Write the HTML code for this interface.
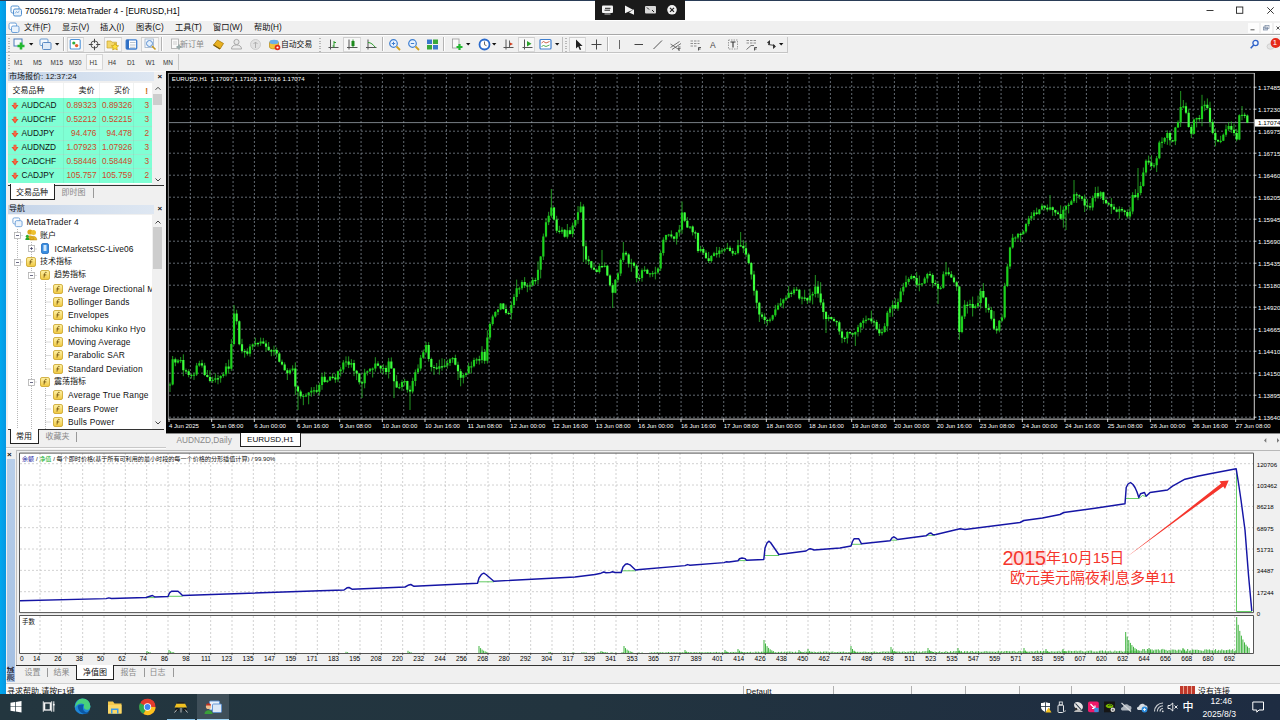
<!DOCTYPE html><html><head><meta charset="utf-8"><title>MT4</title><style>
html,body{margin:0;padding:0}
body{width:1280px;height:720px;overflow:hidden;position:relative;background:#f0f0f0;font-family:"Liberation Sans","Noto Sans CJK SC",sans-serif;font-size:8px}
.a{position:absolute;box-sizing:border-box}
.t{white-space:nowrap}
svg{overflow:visible}
</style></head><body><svg class="a" style="left:0;top:0" width="0" height="0"><defs><linearGradient id="fg" x1="0" y1="0" x2="0" y2="1"><stop offset="0" stop-color="#fff3a8"/><stop offset="1" stop-color="#f0c840"/></linearGradient></defs></svg><div class="a" style="left:0px;top:0px;width:1280px;height:1px;background:#2a3d57;"></div><div class="a" style="left:0px;top:1px;width:5.6px;height:693px;background:linear-gradient(90deg,#00a8ef,#0697e2);"></div><div class="a" style="left:6px;top:1px;width:1274px;height:20px;background:#ffffff;"></div><div class="a t " style="left:25px;top:6px;font-size:8.5px;line-height:10.5px;color:#000;">70056179: MetaTrader 4 - [EURUSD,H1]</div><svg class="a" style="left:10px;top:5px" width="12" height="12" viewBox="0 0 12 12"><rect x="1" y="1" width="8" height="7" rx="1.5" fill="#fff" stroke="#4f8fd0" stroke-width="1"/><rect x="3.5" y="4" width="8" height="7" rx="1.5" fill="#eaf3fc" stroke="#4f8fd0" stroke-width="1"/><path d="M5 8.5l1.5-2 1.3 1.5 1.5-2.3" stroke="#6a9bd0" stroke-width=".7" fill="none"/></svg><svg class="a" style="left:1200px;top:1px" width="80" height="20" viewBox="0 0 80 20"><path d="M6.5 9.5h7" stroke="#222" stroke-width="0.9"/><rect x="36.5" y="6" width="6.3" height="6.3" fill="none" stroke="#222" stroke-width="0.9"/><path d="M67.3 6.3l6.4 6.4M73.7 6.3l-6.4 6.4" stroke="#222" stroke-width="0.9"/></svg><div class="a" style="left:595px;top:0px;width:90px;height:20px;background:#1a1a1a;"></div><svg class="a" style="left:595px;top:0" width="90" height="20" viewBox="0 0 90 20"><rect x="7" y="5.5" width="11" height="7.5" rx="1" fill="#f2f2f2"/><rect x="9.5" y="13.5" width="6" height="1" fill="#ccc"/><path d="M9.5 10.2h5.5M10 8.3h5.5" stroke="#222" stroke-width="1"/><path d="M30 5.5l8 4.2-8 3.6zM39 9.2l-5 3.3 5 2.3z" fill="#f2f2f2"/><rect x="50" y="6" width="11" height="7.5" rx="1" fill="#d8d8d8"/><path d="M52 7.5l2 2M57 10l2 2" stroke="#222" stroke-width="1"/><circle cx="77" cy="9.8" r="4.8" fill="#f2f2f2"/><path d="M75 7.8l4 4M79 7.8l-4 4" stroke="#222" stroke-width="1.2"/></svg><div class="a" style="left:6px;top:21px;width:1274px;height:13.5px;background:#f0f0f0;"></div><svg class="a" style="left:8px;top:22px" width="12" height="12" viewBox="0 0 12 12"><rect x="1" y="1" width="7.5" height="6.5" rx="1.5" fill="#fff" stroke="#6ca0d8" stroke-width="1"/><rect x="3.5" y="4" width="7.5" height="6.5" rx="1.5" fill="#eaf3fc" stroke="#6ca0d8" stroke-width="1"/></svg><div class="a t " style="left:24px;top:23px;font-size:8.2px;line-height:10.2px;color:#111;">文件(F)</div><div class="a t " style="left:62px;top:23px;font-size:8.2px;line-height:10.2px;color:#111;">显示(V)</div><div class="a t " style="left:100px;top:23px;font-size:8.2px;line-height:10.2px;color:#111;">插入(I)</div><div class="a t " style="left:136px;top:23px;font-size:8.2px;line-height:10.2px;color:#111;">图表(C)</div><div class="a t " style="left:175px;top:23px;font-size:8.2px;line-height:10.2px;color:#111;">工具(T)</div><div class="a t " style="left:213px;top:23px;font-size:8.2px;line-height:10.2px;color:#111;">窗口(W)</div><div class="a t " style="left:254px;top:23px;font-size:8.2px;line-height:10.2px;color:#111;">帮助(H)</div><div class="a" style="left:1248px;top:23px;width:11px;height:10px;background:#fdfdfd;"></div><div class="a" style="left:1261px;top:23px;width:11px;height:10px;background:#fdfdfd;"></div><div class="a" style="left:1274px;top:23px;width:6px;height:10px;background:#fdfdfd;"></div><svg class="a" style="left:1248px;top:23px" width="32" height="10" viewBox="0 0 32 10"><path d="M2.5 6.8h4" stroke="#555" stroke-width="1"/><rect x="15.5" y="4" width="4" height="3" fill="#cfd8e4" stroke="#7788a0" stroke-width=".7"/><rect x="17" y="2.5" width="4" height="3" fill="none" stroke="#7788a0" stroke-width=".7"/><path d="M28.5 3.5l3 3M31.5 3.5l-3 3" stroke="#555" stroke-width="1"/></svg><div class="a" style="left:6px;top:34px;width:1274px;height:1px;background:#a8a8a8;"></div><div class="a" style="left:6px;top:35px;width:1274px;height:1px;background:#ffffff;"></div><div class="a" style="left:8px;top:38px;width:2px;height:14px;background:repeating-linear-gradient(#b8b8b8 0 1px,transparent 1px 2.6px)"></div><div class="a" style="left:63px;top:37px;width:1px;height:14px;background:#b4b4b4;"></div><div class="a" style="left:64px;top:37px;width:1px;height:14px;background:#fff;"></div><div class="a" style="left:161px;top:37px;width:1px;height:14px;background:#b4b4b4;"></div><div class="a" style="left:162px;top:37px;width:1px;height:14px;background:#fff;"></div><div class="a" style="left:67px;top:37px;width:17px;height:15px;background:#f7f7f7;border:1px solid #dadada;border-top-color:#cfcfcf;border-left-color:#d2d2d2;"></div><div class="a" style="left:104px;top:37px;width:18px;height:15px;background:#f7f7f7;border:1px solid #dadada;border-top-color:#cfcfcf;border-left-color:#d2d2d2;"></div><div class="a" style="left:141px;top:37px;width:18px;height:15px;background:#f7f7f7;border:1px solid #dadada;border-top-color:#cfcfcf;border-left-color:#d2d2d2;"></div><svg class="a" style="left:28.5px;top:43px" width="5" height="3" viewBox="0 0 5 3"><path d="M0 0h4.4L2.2 2.6z" fill="#111"/></svg><svg class="a" style="left:54.5px;top:43px" width="5" height="3" viewBox="0 0 5 3"><path d="M0 0h4.4L2.2 2.6z" fill="#111"/></svg><svg class="a" style="left:12.5px;top:38px" width="13" height="13" viewBox="0 0 13 13"><rect x="1" y="1" width="8" height="7" fill="#f4f8fc" stroke="#4a7ab8" stroke-width="1"/><path d="M8 4.5v7M4.5 8h7" stroke="#22b830" stroke-width="2.6"/></svg><svg class="a" style="left:38.5px;top:38px" width="13" height="13" viewBox="0 0 13 13"><rect x="1" y="1" width="8" height="6.5" rx="1" fill="#f4f8fc" stroke="#6a9ad0" stroke-width="1"/><rect x="3.5" y="4.5" width="8.5" height="7" rx="1" fill="#dfeaf7" stroke="#5a8ac4" stroke-width="1"/></svg><svg class="a" style="left:69px;top:38px" width="13" height="13" viewBox="0 0 13 13"><rect x="1.2" y="1.5" width="10" height="9.5" rx="1" fill="#fff" stroke="#4f93d8" stroke-width="1.1"/><circle cx="4.8" cy="5" r="1.6" fill="#2fae3a"/><circle cx="7.6" cy="7.6" r="1.7" fill="#e8602a"/></svg><svg class="a" style="left:88px;top:38px" width="13" height="13" viewBox="0 0 13 13"><circle cx="6.5" cy="6.5" r="3.6" fill="none" stroke="#555" stroke-width="1"/><path d="M6.5 .8v4M6.5 8.2v4M.8 6.5h4M8.2 6.5h4" stroke="#444" stroke-width="1"/></svg><svg class="a" style="left:105.5px;top:38px" width="13" height="13" viewBox="0 0 13 13"><path d="M1 3h4l1 1.2h4.5v5.8H1z" fill="#f3d76a" stroke="#c9a227" stroke-width=".7"/><path d="M9 5.2l1.2 2.3 2.4.3-1.8 1.7.5 2.5L9 10.8 6.700 12l.5-2.500-1.800-1.700 2.400-.3z" fill="#ffe13a" stroke="#c49a10" stroke-width=".7"/></svg><svg class="a" style="left:124.5px;top:38px" width="13" height="13" viewBox="0 0 13 13"><rect x="1.2" y="1.8" width="10.5" height="9.200" rx="1" fill="#fff" stroke="#3f7fd0" stroke-width="1.3"/><rect x="1.200" y="1.8" width="2.8" height="9.2" fill="#2f6fc4"/><path d="M5 4.5h5.500M5 7h5.500M5 9.300h5.500" stroke="#9ab" stroke-width=".7"/></svg><svg class="a" style="left:144px;top:38px" width="13" height="13" viewBox="0 0 13 13"><rect x="1" y="1" width="8.500" height="8.500" fill="#f8fbff" stroke="#9ab0c8" stroke-width=".8"/><circle cx="5.500" cy="5.500" r="3" fill="#e4f0fc" stroke="#5a8fd0" stroke-width="1"/><path d="M8 8l3.500 3.500" stroke="#c89a20" stroke-width="1.600"/></svg><svg class="a" style="left:169.5px;top:38px" width="13" height="13" viewBox="0 0 13 13"><rect x="1.500" y="1" width="7" height="9.500" fill="#fafafa" stroke="#aaa" stroke-width=".8"/><path d="M3 4h4M3 6h4" stroke="#bbb" stroke-width=".7"/><path d="M9 6.500v5M6.500 9h5" stroke="#9aa" stroke-width="1.800"/></svg><div class="a t " style="left:180px;top:39.5px;font-size:8px;line-height:10px;color:#8c8c8c;">新订单</div><svg class="a" style="left:212px;top:38px" width="13" height="13" viewBox="0 0 13 13"><path d="M1.500 7l4-5 6 3.500-3.500 5.500z" fill="#e8b020" stroke="#a87808" stroke-width=".8"/><path d="M1.500 7l6.500 4" stroke="#7a5a08" stroke-width="1.200"/></svg><svg class="a" style="left:230px;top:38px" width="13" height="13" viewBox="0 0 13 13"><circle cx="6.500" cy="4" r="2.600" fill="#e8e8e8" stroke="#999" stroke-width=".8"/><path d="M1.500 11c0-3 2.200-4 5-4s5 1 5 4z" fill="#ececec" stroke="#999" stroke-width=".8"/></svg><svg class="a" style="left:248.5px;top:38px" width="13" height="13" viewBox="0 0 13 13"><circle cx="6.500" cy="6.500" r="5" fill="#e2e2e2" stroke="#c4c4c4" stroke-width=".8"/><path d="M6.500 4v6M4.500 5.500a3 3 0 0 1 4 0" stroke="#aaa" stroke-width=".9" fill="none"/></svg><svg class="a" style="left:267.5px;top:38px" width="13" height="13" viewBox="0 0 13 13"><path d="M1.500 4.500c0-2.500 9-2.500 9 0v4.500c0 2.500-9 2.500-9 0z" fill="#f2c23a" stroke="#b88a10" stroke-width=".7"/><ellipse cx="6" cy="4" rx="4.500" ry="2.200" fill="#6cb0e8"/><circle cx="9.500" cy="9.500" r="2.800" fill="#e02818"/><circle cx="9.500" cy="9.500" r="1.100" fill="#fff"/></svg><div class="a t " style="left:281px;top:39.8px;font-size:7.8px;line-height:9.8px;color:#111;">自动交易</div><div class="a" style="left:319px;top:38px;width:2px;height:14px;background:repeating-linear-gradient(#b8b8b8 0 1px,transparent 1px 2.6px)"></div><div class="a" style="left:343px;top:37px;width:18px;height:15px;background:#f7f7f7;border:1px solid #dadada;border-top-color:#cfcfcf;border-left-color:#d2d2d2;"></div><svg class="a" style="left:326.5px;top:38px" width="13" height="13" viewBox="0 0 13 13"><path d="M3.500 1.500v10M1.500 9.500h10" stroke="#555" stroke-width="1"/><path d="M7 3v6.500M7 4.500h2M5.500 8h1.500" stroke="#2a9a2a" stroke-width="1"/></svg><svg class="a" style="left:345.5px;top:38px" width="13" height="13" viewBox="0 0 13 13"><path d="M3 1.500v10M1 9.500h10.500" stroke="#555" stroke-width="1"/><rect x="5.500" y="3" width="3" height="5" fill="#1e8a1e"/><path d="M7 1.500v8" stroke="#1e8a1e" stroke-width=".9"/></svg><svg class="a" style="left:364.5px;top:38px" width="13" height="13" viewBox="0 0 13 13"><path d="M3 1.500v10M1 9.500h10.500" stroke="#555" stroke-width="1"/><path d="M3 4.500c3 0 5 2 7.500 5" stroke="#2a9a2a" stroke-width="1" fill="none"/></svg><div class="a" style="left:382px;top:37px;width:1px;height:14px;background:#b4b4b4;"></div><div class="a" style="left:383px;top:37px;width:1px;height:14px;background:#fff;"></div><svg class="a" style="left:387.5px;top:38px" width="13" height="13" viewBox="0 0 13 13"><circle cx="5.500" cy="5.500" r="3.800" fill="#eaf3fd" stroke="#3f7fd0" stroke-width="1.200"/><path d="M3.800 5.500h3.400M5.500 3.800v3.400" stroke="#3f7fd0" stroke-width="1"/><path d="M8.500 8.500l3.500 3.500" stroke="#d0a020" stroke-width="1.800"/></svg><svg class="a" style="left:406.5px;top:38px" width="13" height="13" viewBox="0 0 13 13"><circle cx="5.500" cy="5.500" r="3.800" fill="#eaf3fd" stroke="#3f7fd0" stroke-width="1.200"/><path d="M3.800 5.500h3.400" stroke="#3f7fd0" stroke-width="1"/><path d="M8.500 8.500l3.500 3.500" stroke="#d0a020" stroke-width="1.800"/></svg><svg class="a" style="left:425.5px;top:38px" width="13" height="13" viewBox="0 0 13 13"><rect x="1" y="1.500" width="5" height="4.500" fill="#3a78cc"/><rect x="7" y="1.500" width="5" height="4.500" fill="#38a838"/><rect x="1" y="7" width="5" height="4.500" fill="#38a838"/><rect x="7" y="7" width="5" height="4.500" fill="#3a78cc"/></svg><div class="a" style="left:443px;top:37px;width:1px;height:14px;background:#b4b4b4;"></div><div class="a" style="left:444px;top:37px;width:1px;height:14px;background:#fff;"></div><svg class="a" style="left:451px;top:38px" width="13" height="13" viewBox="0 0 13 13"><rect x="1.500" y="1" width="6.500" height="9" fill="#fafafa" stroke="#999" stroke-width=".8"/><path d="M8.500 6v6M5.500 9h6" stroke="#22b830" stroke-width="2.200"/></svg><svg class="a" style="left:465.5px;top:43px" width="5" height="3" viewBox="0 0 5 3"><path d="M0 0h4.4L2.2 2.6z" fill="#111"/></svg><svg class="a" style="left:477.5px;top:38px" width="13" height="13" viewBox="0 0 13 13"><circle cx="6.500" cy="6.500" r="5" fill="#fff" stroke="#2a6acc" stroke-width="1.800"/><path d="M6.500 3.500v3.200l2 1" stroke="#555" stroke-width=".9" fill="none"/></svg><svg class="a" style="left:491.5px;top:43px" width="5" height="3" viewBox="0 0 5 3"><path d="M0 0h4.4L2.2 2.6z" fill="#111"/></svg><svg class="a" style="left:501.5px;top:38px" width="13" height="13" viewBox="0 0 13 13"><path d="M4 1.500v10M1.500 9.500h10" stroke="#555" stroke-width="1"/><path d="M7.500 2.500v7" stroke="#555" stroke-width=".9"/><path d="M8 4.500l3 1.500-3 1.500z" fill="#d04020"/></svg><div class="a" style="left:518px;top:37px;width:17px;height:15px;background:#f7f7f7;border:1px solid #dadada;border-top-color:#cfcfcf;border-left-color:#d2d2d2;"></div><svg class="a" style="left:520.5px;top:38px" width="13" height="13" viewBox="0 0 13 13"><path d="M3.500 1.500v10M1.500 9.500h10" stroke="#555" stroke-width="1"/><path d="M6 3l4.500 2.700L6 8.400z" fill="#2aa02a"/></svg><svg class="a" style="left:538.5px;top:38px" width="13" height="13" viewBox="0 0 13 13"><rect x="1" y="1.500" width="11" height="9.500" rx="1" fill="#fff" stroke="#3f7fd0" stroke-width="1.200"/><path d="M2.500 5l2-1.500 2.500 1.500 3.500-1.500" stroke="#c04020" stroke-width=".8" fill="none"/><path d="M2.500 8.500l2-1 2.500 1 3.500-1.500" stroke="#2a9a2a" stroke-width=".8" fill="none"/></svg><svg class="a" style="left:555px;top:43px" width="5" height="3" viewBox="0 0 5 3"><path d="M0 0h4.4L2.2 2.6z" fill="#111"/></svg><div class="a" style="left:562px;top:36.5px;width:1px;height:16px;background:#c0c0c0;"></div><div class="a" style="left:564.5px;top:38px;width:2px;height:14px;background:repeating-linear-gradient(#b8b8b8 0 1px,transparent 1px 2.6px)"></div><div class="a" style="left:569px;top:37px;width:17px;height:15px;background:#f7f7f7;border:1px solid #dadada;border-top-color:#cfcfcf;border-left-color:#d2d2d2;"></div><svg class="a" style="left:571.5px;top:38px" width="13" height="13" viewBox="0 0 13 13"><path d="M4 1.500v9l2.200-2 1.600 3.500 1.400-.6-1.600-3.400h3z" fill="#222"/></svg><svg class="a" style="left:590px;top:38px" width="13" height="13" viewBox="0 0 13 13"><path d="M6.500 1.500v10M1.500 6.500h10" stroke="#444" stroke-width="1"/></svg><div class="a" style="left:607px;top:37px;width:1px;height:14px;background:#b4b4b4;"></div><div class="a" style="left:608px;top:37px;width:1px;height:14px;background:#fff;"></div><svg class="a" style="left:613px;top:38px" width="13" height="13" viewBox="0 0 13 13"><path d="M6.500 2v9" stroke="#666" stroke-width="1"/></svg><svg class="a" style="left:632px;top:38px" width="13" height="13" viewBox="0 0 13 13"><path d="M2.500 6.500h8.500" stroke="#444" stroke-width="1"/></svg><svg class="a" style="left:650.5px;top:38px" width="13" height="13" viewBox="0 0 13 13"><path d="M2.500 11l8.500-8.500" stroke="#555" stroke-width="1"/></svg><svg class="a" style="left:669px;top:38px" width="13" height="13" viewBox="0 0 13 13"><path d="M1.500 9.500l9-6M3 11.500l9-6M1.500 6l9 6" stroke="#555" stroke-width=".8"/><path d="M9 10.500h2.500M9 12h2M9 9h2.500" stroke="#333" stroke-width=".7"/></svg><svg class="a" style="left:688.5px;top:38px" width="13" height="13" viewBox="0 0 13 13"><path d="M1.500 3h9M1.500 5.500h9M1.500 8h6" stroke="#777" stroke-width=".8" stroke-dasharray="2.500 1"/><path d="M9.500 9.500h2.500M9.500 9.500v3M9.500 11h2" stroke="#333" stroke-width=".8"/></svg><div class="a t " style="left:710px;top:39.5px;font-size:8.5px;line-height:10.5px;color:#444;">A</div><svg class="a" style="left:726.5px;top:38px" width="13" height="13" viewBox="0 0 13 13"><rect x="1.500" y="2" width="9" height="9" fill="none" stroke="#888" stroke-width=".8" stroke-dasharray="1.500 1"/><path d="M3.500 4h5M6 4v5.500" stroke="#333" stroke-width="1.100"/></svg><svg class="a" style="left:745px;top:38px" width="13" height="13" viewBox="0 0 13 13"><path d="M1.500 2.500h10M1.500 5h10" stroke="#777" stroke-width=".8" stroke-dasharray="2.500 1"/><path d="M1.500 11.500l4.500-4h3" stroke="#555" stroke-width=".8" fill="none"/><path d="M9.500 9.500h2.500M9.500 9.500v3M9.500 11h2" stroke="#333" stroke-width=".8"/></svg><svg class="a" style="left:764.5px;top:38px" width="13" height="13" viewBox="0 0 13 13"><path d="M2 4.500l3-2.500v5zM11 8.500l-3 2.500v-5z" fill="#333"/><path d="M3 6.500l7 1" stroke="#333" stroke-width=".9"/></svg><svg class="a" style="left:778.5px;top:43px" width="5" height="3" viewBox="0 0 5 3"><path d="M0 0h4.4L2.2 2.6z" fill="#111"/></svg><div class="a" style="left:786.5px;top:36.5px;width:1px;height:16px;background:#c8c8c8;"></div><svg class="a" style="left:1249px;top:38px" width="31" height="14" viewBox="0 0 31 14"><circle cx="6.500" cy="5" r="2.600" fill="#eef5ff" stroke="#2f62c8" stroke-width="1.300"/><path d="M4.700 7l-3 3.300" stroke="#2f62c8" stroke-width="1.600"/><ellipse cx="21.500" cy="8.500" rx="3.500" ry="2.800" fill="#e4e4e4" stroke="#c0c0c0" stroke-width=".6"/><circle cx="26.600" cy="5" r="5" fill="#e52a1a"/></svg><div class="a t " style="left:1272.7px;top:37.5px;font-size:7.8px;line-height:9.8px;color:#fff;">1</div><div class="a" style="left:6px;top:52px;width:781px;height:1px;background:#c4c4c4;"></div><div class="a" style="left:6px;top:53px;width:781px;height:1px;background:#fbfbfb;"></div><div class="a" style="left:8px;top:55px;width:2px;height:14px;background:repeating-linear-gradient(#b8b8b8 0 1px,transparent 1px 2.6px)"></div><div class="a" style="left:86px;top:54px;width:17px;height:16px;background:#f8f8f8;border:1px solid #d6d6d6;border-bottom-color:#e4e4e4;"></div><div class="a t " style="left:14px;top:58.8px;font-size:6.4px;line-height:8.4px;color:#333;">M1</div><div class="a t " style="left:33px;top:58.8px;font-size:6.4px;line-height:8.4px;color:#333;">M5</div><div class="a t " style="left:50.5px;top:58.8px;font-size:6.4px;line-height:8.4px;color:#333;">M15</div><div class="a t " style="left:69px;top:58.8px;font-size:6.4px;line-height:8.4px;color:#333;">M30</div><div class="a t " style="left:89.5px;top:58.8px;font-size:6.4px;line-height:8.4px;color:#333;">H1</div><div class="a t " style="left:108px;top:58.8px;font-size:6.4px;line-height:8.4px;color:#333;">H4</div><div class="a t " style="left:127px;top:58.8px;font-size:6.4px;line-height:8.4px;color:#333;">D1</div><div class="a t " style="left:145.5px;top:58.8px;font-size:6.4px;line-height:8.4px;color:#333;">W1</div><div class="a t " style="left:163px;top:58.8px;font-size:6.4px;line-height:8.4px;color:#333;">MN</div><div class="a" style="left:178px;top:54px;width:1px;height:16px;background:#c8c8c8;"></div><div class="a" style="left:6px;top:71px;width:160px;height:1px;background:#fafafa;"></div><div class="a" style="left:8px;top:72px;width:146px;height:9.3px;background:linear-gradient(90deg,#c3d3e8,#d3dfee 50%,#dee7f2);"></div><div class="a t " style="left:9px;top:71.8px;font-size:8px;line-height:10px;color:#111;">市场报价: 12:37:24</div><div class="a t " style="left:157.5px;top:71.5px;font-size:8px;line-height:10px;color:#111;font-weight:bold">×</div><div class="a" style="left:8px;top:83px;width:144px;height:101px;background:#fff;"></div><div class="a" style="left:152px;top:83px;width:12px;height:101px;background:#f0f0f0;"></div><div class="a" style="left:152.5px;top:94px;width:9.5px;height:11px;background:#cdcdcd;"></div><svg class="a" style="left:153px;top:83px" width="10" height="101" viewBox="0 0 10 101"><path d="M2.500 6.800l2.500-2.500 2.500 2.500" stroke="#444" stroke-width="1" fill="none"/><path d="M2.500 95.500l2.500 2.500 2.500-2.500" stroke="#444" stroke-width="1" fill="none"/></svg><div class="a" style="left:8px;top:98.3px;width:144px;height:85.2px;background:#7fffd4;"></div><div class="a" style="left:8px;top:111.5px;width:144px;height:1px;background:#9be9cd;"></div><div class="a" style="left:8px;top:125.5px;width:144px;height:1px;background:#9be9cd;"></div><div class="a" style="left:8px;top:139.5px;width:144px;height:1px;background:#9be9cd;"></div><div class="a" style="left:8px;top:153.5px;width:144px;height:1px;background:#9be9cd;"></div><div class="a" style="left:8px;top:167.5px;width:144px;height:1px;background:#9be9cd;"></div><div class="a" style="left:63px;top:83px;width:1px;height:100px;background:rgba(60,90,80,.08);"></div><div class="a" style="left:98.5px;top:83px;width:1px;height:100px;background:rgba(60,90,80,.08);"></div><div class="a" style="left:133.3px;top:83px;width:1px;height:100px;background:rgba(60,90,80,.08);"></div><div class="a t " style="left:12.5px;top:85.9px;font-size:8px;line-height:10px;color:#111;">交易品种</div><div class="a t " style="left:78.5px;top:85.9px;font-size:8px;line-height:10px;color:#111;">卖价</div><div class="a t " style="left:114px;top:85.9px;font-size:8px;line-height:10px;color:#111;">买价</div><div class="a t " style="left:145.3px;top:85.7px;font-size:8.5px;line-height:10.5px;color:#c8680f;font-weight:bold;">!</div><svg class="a" style="left:11px;top:101.5px" width="8" height="8" viewBox="0 0 8 8"><path d="M2.600 .700h2.800v2.300h2.100L4 7.400.500 3h2.100z" fill="#e8482a"/><path d="M3.200 1.300h1.600v2.300h1.200L4 6 2 3.600h1.200z" fill="#ff8a60" opacity=".6"/></svg><div class="a t " style="left:21.5px;top:100.2px;font-size:8.3px;line-height:10.3px;color:#111;">AUDCAD</div><div class="a t" style="right:1183.5px;top:100.2px;font-size:8.300px;line-height:10px;color:#d04828">0.89323</div><div class="a t" style="right:1148px;top:100.2px;font-size:8.300px;line-height:10px;color:#d04828">0.89326</div><div class="a t" style="right:1131px;top:100.2px;font-size:8.300px;line-height:10px;color:#d04828">3</div><svg class="a" style="left:11px;top:115.5px" width="8" height="8" viewBox="0 0 8 8"><path d="M2.600 .700h2.800v2.300h2.100L4 7.400.500 3h2.100z" fill="#e8482a"/><path d="M3.200 1.300h1.600v2.300h1.200L4 6 2 3.600h1.200z" fill="#ff8a60" opacity=".6"/></svg><div class="a t " style="left:21.5px;top:114.2px;font-size:8.3px;line-height:10.3px;color:#111;">AUDCHF</div><div class="a t" style="right:1183.5px;top:114.2px;font-size:8.300px;line-height:10px;color:#d04828">0.52212</div><div class="a t" style="right:1148px;top:114.2px;font-size:8.300px;line-height:10px;color:#d04828">0.52215</div><div class="a t" style="right:1131px;top:114.2px;font-size:8.300px;line-height:10px;color:#d04828">3</div><svg class="a" style="left:11px;top:129.5px" width="8" height="8" viewBox="0 0 8 8"><path d="M2.600 .700h2.800v2.300h2.100L4 7.400.500 3h2.100z" fill="#e8482a"/><path d="M3.200 1.300h1.600v2.300h1.200L4 6 2 3.600h1.200z" fill="#ff8a60" opacity=".6"/></svg><div class="a t " style="left:21.5px;top:128.2px;font-size:8.3px;line-height:10.3px;color:#111;">AUDJPY</div><div class="a t" style="right:1183.5px;top:128.2px;font-size:8.300px;line-height:10px;color:#d04828">94.476</div><div class="a t" style="right:1148px;top:128.2px;font-size:8.300px;line-height:10px;color:#d04828">94.478</div><div class="a t" style="right:1131px;top:128.2px;font-size:8.300px;line-height:10px;color:#d04828">2</div><svg class="a" style="left:11px;top:143.5px" width="8" height="8" viewBox="0 0 8 8"><path d="M2.600 .700h2.800v2.300h2.100L4 7.400.500 3h2.100z" fill="#e8482a"/><path d="M3.200 1.300h1.600v2.300h1.200L4 6 2 3.600h1.200z" fill="#ff8a60" opacity=".6"/></svg><div class="a t " style="left:21.5px;top:142.2px;font-size:8.3px;line-height:10.3px;color:#111;">AUDNZD</div><div class="a t" style="right:1183.5px;top:142.2px;font-size:8.300px;line-height:10px;color:#d04828">1.07923</div><div class="a t" style="right:1148px;top:142.2px;font-size:8.300px;line-height:10px;color:#d04828">1.07926</div><div class="a t" style="right:1131px;top:142.2px;font-size:8.300px;line-height:10px;color:#d04828">3</div><svg class="a" style="left:11px;top:157.5px" width="8" height="8" viewBox="0 0 8 8"><path d="M2.600 .700h2.800v2.300h2.100L4 7.400.500 3h2.100z" fill="#e8482a"/><path d="M3.200 1.300h1.600v2.300h1.200L4 6 2 3.600h1.200z" fill="#ff8a60" opacity=".6"/></svg><div class="a t " style="left:21.5px;top:156.2px;font-size:8.3px;line-height:10.3px;color:#111;">CADCHF</div><div class="a t" style="right:1183.5px;top:156.2px;font-size:8.300px;line-height:10px;color:#d04828">0.58446</div><div class="a t" style="right:1148px;top:156.2px;font-size:8.300px;line-height:10px;color:#d04828">0.58449</div><div class="a t" style="right:1131px;top:156.2px;font-size:8.300px;line-height:10px;color:#d04828">3</div><svg class="a" style="left:11px;top:171.5px" width="8" height="8" viewBox="0 0 8 8"><path d="M2.600 .700h2.800v2.300h2.100L4 7.400.500 3h2.100z" fill="#e8482a"/><path d="M3.200 1.300h1.600v2.300h1.200L4 6 2 3.600h1.200z" fill="#ff8a60" opacity=".6"/></svg><div class="a t " style="left:21.5px;top:170.2px;font-size:8.3px;line-height:10.3px;color:#111;">CADJPY</div><div class="a t" style="right:1183.5px;top:170.2px;font-size:8.300px;line-height:10px;color:#d04828">105.757</div><div class="a t" style="right:1148px;top:170.2px;font-size:8.300px;line-height:10px;color:#d04828">105.759</div><div class="a t" style="right:1131px;top:170.2px;font-size:8.300px;line-height:10px;color:#d04828">2</div><div class="a" style="left:8px;top:184.5px;width:156px;height:1px;background:#333;"></div><div class="a" style="left:9.5px;top:184px;width:45px;height:15.5px;background:#fff;border:1px solid #222;border-top:none;"></div><div class="a t " style="left:16px;top:187.8px;font-size:8px;line-height:10px;color:#111;">交易品种</div><div class="a t " style="left:61.5px;top:187.8px;font-size:8px;line-height:10px;color:#888;">即时图</div><div class="a" style="left:92.5px;top:188px;width:1px;height:10px;background:#999;"></div><div class="a" style="left:8px;top:204.7px;width:146px;height:9px;background:linear-gradient(90deg,#c3d3e8,#d3dfee 50%,#dee7f2);"></div><div class="a t " style="left:9px;top:204.3px;font-size:8px;line-height:10px;color:#111;">导航</div><div class="a t " style="left:157.5px;top:203.5px;font-size:8px;line-height:10px;color:#111;font-weight:bold">×</div><div class="a" style="left:8px;top:215px;width:144px;height:214px;background:#fff;"></div><div class="a" style="left:152px;top:215px;width:12px;height:214px;background:#f0f0f0;"></div><div class="a" style="left:152.5px;top:227px;width:9.5px;height:42px;background:#cdcdcd;"></div><svg class="a" style="left:153px;top:215px" width="10" height="214" viewBox="0 0 10 214"><path d="M2.500 8.500l2.500-2.500 2.500 2.500" stroke="#444" stroke-width="1" fill="none"/><path d="M2.500 206.500l2.500 2.500 2.500-2.500" stroke="#444" stroke-width="1" fill="none"/></svg><svg class="a" style="left:0;top:0" width="170" height="430" viewBox="0 0 170 430"><path d="M17.500 229V429M17.500 235.500h6M17.500 262h6M31.500 242V429M31.500 249h5M31.500 275.500h5M31.500 382h5M45.500 282V369M45.500 388V429M45.500 289h6M45.500 302h6M45.500 315.500h6M45.500 329h6M45.500 342h6M45.500 355.500h6M45.500 369h6M45.500 395.500h6M45.500 409h6M45.500 422h6" stroke="#9a9a9a" stroke-width=".7" stroke-dasharray="1 1" fill="none"/></svg><svg class="a" style="left:12px;top:216.500px" width="11" height="11" viewBox="0 0 12 12"><rect x="1" y="1" width="7.500" height="6.500" rx="1.500" fill="#fff" stroke="#6ca0d8" stroke-width="1"/><rect x="3.500" y="4" width="7.500" height="6.500" rx="1.500" fill="#eaf3fc" stroke="#6ca0d8" stroke-width="1"/></svg><div class="a t " style="left:26.5px;top:217.0px;font-size:8.4px;line-height:10.4px;color:#111;letter-spacing:.2px;">MetaTrader 4</div><svg class="a" style="left:14.0px;top:231.83333333333334px" width="7" height="7" viewBox="0 0 7 7"><rect x=".500" y=".500" width="6" height="6" fill="#fff" stroke="#b0b0b0" stroke-width=".8"/><path d="M2 3.500h3" stroke="#446" stroke-width=".8"/></svg><svg class="a" style="left:24.500px;top:229.33333333333334px" width="12" height="12" viewBox="0 0 12 12"><circle cx="5" cy="3" r="2.600" fill="#e0a818"/><circle cx="8.500" cy="3.600" r="2.500" fill="#edc030"/><path d="M1.500 10.500c0-5 7-5 7 0zM5 11c0-5 6.800-5 6.800 0z" fill="#e6b422" stroke="#b88a10" stroke-width=".5"/><circle cx="2.300" cy="7.300" r="1.500" fill="#30b030"/><path d="M.300 11c0-3.200 4.200-3.200 4.200 0z" fill="#28a428"/></svg><div class="a t " style="left:40px;top:231.03333333333333px;font-size:8px;line-height:10px;color:#111;">账户</div><svg class="a" style="left:28.0px;top:245.16666666666666px" width="7" height="7" viewBox="0 0 7 7"><rect x=".500" y=".500" width="6" height="6" fill="#fff" stroke="#b0b0b0" stroke-width=".8"/><path d="M2 3.500h3M3.500 2v3" stroke="#446" stroke-width=".8"/></svg><svg class="a" style="left:41px;top:243.16666666666666px" width="8" height="11" viewBox="0 0 8 11"><rect x=".500" y=".500" width="7" height="10" rx="1.500" fill="#3a8ee0" stroke="#1f6cc0" stroke-width=".8"/><rect x="2.500" y="2" width="3" height="6" fill="#cfe6fb"/></svg><div class="a t " style="left:54.5px;top:243.66666666666666px;font-size:8.4px;line-height:10.4px;color:#111;letter-spacing:.1px;">ICMarketsSC-Live06</div><svg class="a" style="left:14.0px;top:258.5px" width="7" height="7" viewBox="0 0 7 7"><rect x=".500" y=".500" width="6" height="6" fill="#fff" stroke="#b0b0b0" stroke-width=".8"/><path d="M2 3.500h3" stroke="#446" stroke-width=".8"/></svg><svg class="a" style="left:25.5px;top:257.0px" width="10" height="10" viewBox="0 0 10 10"><rect x=".500" y=".500" width="9" height="9" rx="1.500" fill="url(#fg)" stroke="#c9a227" stroke-width=".8"/><path d="M6.600 2.400c-1.500-.500-1.900.500-2.100 2l-.500 3.200M3.400 4.900h2.900" stroke="#6a4a08" stroke-width=".8" fill="none"/></svg><div class="a t " style="left:40px;top:257.4px;font-size:8px;line-height:10px;color:#111;">技术指标</div><svg class="a" style="left:28.0px;top:271.8333333333333px" width="7" height="7" viewBox="0 0 7 7"><rect x=".500" y=".500" width="6" height="6" fill="#fff" stroke="#b0b0b0" stroke-width=".8"/><path d="M2 3.500h3" stroke="#446" stroke-width=".8"/></svg><svg class="a" style="left:39.5px;top:270.3333333333333px" width="10" height="10" viewBox="0 0 10 10"><rect x=".500" y=".500" width="9" height="9" rx="1.500" fill="url(#fg)" stroke="#c9a227" stroke-width=".8"/><path d="M6.600 2.400c-1.500-.500-1.900.500-2.100 2l-.500 3.200M3.400 4.900h2.900" stroke="#6a4a08" stroke-width=".8" fill="none"/></svg><div class="a t " style="left:54px;top:270.3333333333333px;font-size:8px;line-height:10px;color:#111;">趋势指标</div><svg class="a" style="left:53px;top:283.6666666666667px" width="10" height="10" viewBox="0 0 10 10"><rect x=".500" y=".500" width="9" height="9" rx="1.500" fill="url(#fg)" stroke="#c9a227" stroke-width=".8"/><path d="M6.600 2.400c-1.500-.500-1.900.500-2.100 2l-.500 3.200M3.400 4.900h2.900" stroke="#6a4a08" stroke-width=".8" fill="none"/></svg><div class="a t" style="left:68px;top:283.6666666666667px;font-size:8.400px;letter-spacing:.2px;line-height:10px;color:#111;max-width:83.500px;overflow:hidden">Average Directional M</div><svg class="a" style="left:53px;top:297.0px" width="10" height="10" viewBox="0 0 10 10"><rect x=".500" y=".500" width="9" height="9" rx="1.500" fill="url(#fg)" stroke="#c9a227" stroke-width=".8"/><path d="M6.600 2.400c-1.500-.500-1.900.500-2.100 2l-.500 3.200M3.400 4.900h2.900" stroke="#6a4a08" stroke-width=".8" fill="none"/></svg><div class="a t" style="left:68px;top:297.0px;font-size:8.400px;letter-spacing:.2px;line-height:10px;color:#111;max-width:83.500px;overflow:hidden">Bollinger Bands</div><svg class="a" style="left:53px;top:310.33333333333337px" width="10" height="10" viewBox="0 0 10 10"><rect x=".500" y=".500" width="9" height="9" rx="1.500" fill="url(#fg)" stroke="#c9a227" stroke-width=".8"/><path d="M6.600 2.400c-1.500-.500-1.900.500-2.100 2l-.500 3.200M3.400 4.900h2.900" stroke="#6a4a08" stroke-width=".8" fill="none"/></svg><div class="a t" style="left:68px;top:310.33333333333337px;font-size:8.400px;letter-spacing:.2px;line-height:10px;color:#111;max-width:83.500px;overflow:hidden">Envelopes</div><svg class="a" style="left:53px;top:323.6666666666667px" width="10" height="10" viewBox="0 0 10 10"><rect x=".500" y=".500" width="9" height="9" rx="1.500" fill="url(#fg)" stroke="#c9a227" stroke-width=".8"/><path d="M6.600 2.400c-1.500-.500-1.900.500-2.100 2l-.500 3.200M3.400 4.900h2.900" stroke="#6a4a08" stroke-width=".8" fill="none"/></svg><div class="a t" style="left:68px;top:323.6666666666667px;font-size:8.400px;letter-spacing:.2px;line-height:10px;color:#111;max-width:83.500px;overflow:hidden">Ichimoku Kinko Hyo</div><svg class="a" style="left:53px;top:337.0px" width="10" height="10" viewBox="0 0 10 10"><rect x=".500" y=".500" width="9" height="9" rx="1.500" fill="url(#fg)" stroke="#c9a227" stroke-width=".8"/><path d="M6.600 2.400c-1.500-.500-1.900.500-2.100 2l-.500 3.200M3.400 4.900h2.900" stroke="#6a4a08" stroke-width=".8" fill="none"/></svg><div class="a t" style="left:68px;top:337.0px;font-size:8.400px;letter-spacing:.2px;line-height:10px;color:#111;max-width:83.500px;overflow:hidden">Moving Average</div><svg class="a" style="left:53px;top:350.33333333333337px" width="10" height="10" viewBox="0 0 10 10"><rect x=".500" y=".500" width="9" height="9" rx="1.500" fill="url(#fg)" stroke="#c9a227" stroke-width=".8"/><path d="M6.600 2.400c-1.500-.500-1.900.500-2.100 2l-.500 3.200M3.400 4.900h2.900" stroke="#6a4a08" stroke-width=".8" fill="none"/></svg><div class="a t" style="left:68px;top:350.33333333333337px;font-size:8.400px;letter-spacing:.2px;line-height:10px;color:#111;max-width:83.500px;overflow:hidden">Parabolic SAR</div><svg class="a" style="left:53px;top:363.6666666666667px" width="10" height="10" viewBox="0 0 10 10"><rect x=".500" y=".500" width="9" height="9" rx="1.500" fill="url(#fg)" stroke="#c9a227" stroke-width=".8"/><path d="M6.600 2.400c-1.500-.500-1.900.500-2.100 2l-.500 3.200M3.400 4.900h2.900" stroke="#6a4a08" stroke-width=".8" fill="none"/></svg><div class="a t" style="left:68px;top:363.6666666666667px;font-size:8.400px;letter-spacing:.2px;line-height:10px;color:#111;max-width:83.500px;overflow:hidden">Standard Deviation</div><svg class="a" style="left:28.0px;top:378.5px" width="7" height="7" viewBox="0 0 7 7"><rect x=".500" y=".500" width="6" height="6" fill="#fff" stroke="#b0b0b0" stroke-width=".8"/><path d="M2 3.500h3" stroke="#446" stroke-width=".8"/></svg><svg class="a" style="left:39.5px;top:377.0px" width="10" height="10" viewBox="0 0 10 10"><rect x=".500" y=".500" width="9" height="9" rx="1.500" fill="url(#fg)" stroke="#c9a227" stroke-width=".8"/><path d="M6.600 2.400c-1.500-.500-1.900.500-2.100 2l-.500 3.200M3.400 4.900h2.900" stroke="#6a4a08" stroke-width=".8" fill="none"/></svg><div class="a t " style="left:54px;top:377.0px;font-size:8px;line-height:10px;color:#111;">震荡指标</div><svg class="a" style="left:53px;top:390.33333333333337px" width="10" height="10" viewBox="0 0 10 10"><rect x=".500" y=".500" width="9" height="9" rx="1.500" fill="url(#fg)" stroke="#c9a227" stroke-width=".8"/><path d="M6.600 2.400c-1.500-.500-1.900.500-2.100 2l-.500 3.200M3.400 4.900h2.900" stroke="#6a4a08" stroke-width=".8" fill="none"/></svg><div class="a t " style="left:68px;top:390.33333333333337px;font-size:8.4px;line-height:10.4px;color:#111;letter-spacing:.2px;">Average True Range</div><svg class="a" style="left:53px;top:403.6666666666667px" width="10" height="10" viewBox="0 0 10 10"><rect x=".500" y=".500" width="9" height="9" rx="1.500" fill="url(#fg)" stroke="#c9a227" stroke-width=".8"/><path d="M6.600 2.400c-1.500-.500-1.900.500-2.100 2l-.500 3.200M3.400 4.900h2.900" stroke="#6a4a08" stroke-width=".8" fill="none"/></svg><div class="a t " style="left:68px;top:403.6666666666667px;font-size:8.4px;line-height:10.4px;color:#111;letter-spacing:.2px;">Bears Power</div><svg class="a" style="left:53px;top:417.0px" width="10" height="10" viewBox="0 0 10 10"><rect x=".500" y=".500" width="9" height="9" rx="1.500" fill="url(#fg)" stroke="#c9a227" stroke-width=".8"/><path d="M6.600 2.400c-1.500-.500-1.900.500-2.100 2l-.500 3.200M3.400 4.900h2.900" stroke="#6a4a08" stroke-width=".8" fill="none"/></svg><div class="a t " style="left:68px;top:417.0px;font-size:8.4px;line-height:10.4px;color:#111;letter-spacing:.2px;">Bulls Power</div><div class="a" style="left:8px;top:429px;width:156px;height:1px;background:#333;"></div><div class="a" style="left:9.5px;top:429px;width:29px;height:15px;background:#fff;border:1px solid #222;border-top:none;"></div><div class="a t " style="left:16px;top:431.5px;font-size:8px;line-height:10px;color:#111;">常用</div><div class="a t " style="left:45.5px;top:431.5px;font-size:8px;line-height:10px;color:#888;">收藏夹</div><div class="a" style="left:76px;top:431.5px;width:1px;height:10px;background:#999;"></div><div class="a" style="left:166.3px;top:71px;width:1114px;height:361.7px;background:#000;"></div><div class="a" style="left:166px;top:432.7px;width:1114px;height:1.3px;background:#fafafa;"></div><svg class="a" style="left:0;top:0" width="1280" height="720" viewBox="0 0 1280 720"><path d="M190.40 73V419M211.73 73V419M233.07 73V419M254.40 73V419M275.73 73V419M297.07 73V419M318.40 73V419M339.73 73V419M361.07 73V419M382.40 73V419M403.73 73V419M425.07 73V419M446.40 73V419M467.73 73V419M489.07 73V419M510.40 73V419M531.73 73V419M553.07 73V419M574.40 73V419M595.73 73V419M617.07 73V419M638.40 73V419M659.73 73V419M681.07 73V419M702.40 73V419M723.73 73V419M745.07 73V419M766.40 73V419M787.73 73V419M809.07 73V419M830.40 73V419M851.73 73V419M873.07 73V419M894.40 73V419M915.73 73V419M937.07 73V419M958.40 73V419M979.73 73V419M1001.07 73V419M1022.40 73V419M1043.73 73V419M1065.07 73V419M1086.40 73V419M1107.73 73V419M1129.07 73V419M1150.40 73V419M1171.73 73V419M1193.07 73V419M1214.40 73V419M1235.73 73V419M169 87.20H1254M169 109.20H1254M169 131.20H1254M169 153.20H1254M169 175.20H1254M169 197.20H1254M169 219.20H1254M169 241.20H1254M169 263.20H1254M169 285.20H1254M169 307.20H1254M169 329.20H1254M169 351.20H1254M169 373.20H1254M169 395.20H1254M169 417.20H1254" stroke="#8c96a0" stroke-width="0.7" stroke-dasharray="2 2" fill="none"/><path d="M169 122.6H1254" stroke="#a0a8b2" stroke-width="0.75"/><path d="M170.00 382.5V392.0M172.67 356.0V385.4M175.33 357.6V366.2M178.00 359.0V363.5M180.67 357.0V363.1M183.33 354.3V376.2M186.00 368.5V372.8M188.67 369.2V377.3M191.33 373.3V378.5M194.00 372.5V379.9M196.67 362.9V376.0M199.33 360.8V366.7M202.00 359.8V367.6M204.67 362.8V376.1M207.33 370.0V377.5M210.00 370.3V382.4M212.67 376.7V383.0M215.33 373.2V382.6M218.00 374.8V384.3M220.67 375.3V382.7M223.33 372.0V377.7M226.00 363.0V376.3M228.67 359.6V373.7M231.33 339.2V370.9M234.00 305.0V345.5M236.67 309.7V324.6M239.33 320.4V345.3M242.00 338.8V353.4M244.67 349.1V357.6M247.33 348.2V355.6M250.00 344.1V356.6M252.67 343.5V350.0M255.33 337.7V346.5M258.00 341.8V346.7M260.67 337.6V345.8M263.33 337.9V344.0M266.00 340.3V351.7M268.67 342.0V350.9M271.33 349.0V356.2M274.00 345.6V355.8M276.67 347.6V357.4M279.33 352.1V362.5M282.00 359.6V365.4M284.67 362.4V370.6M287.33 368.2V380.0M290.00 368.5V374.7M292.67 365.3V371.5M295.33 362.4V395.1M298.00 385.5V410.0M300.67 389.7V398.7M303.33 394.0V405.2M306.00 393.2V397.1M308.67 392.1V404.3M311.33 387.2V396.7M314.00 387.0V394.6M316.67 384.6V393.2M319.33 382.6V395.6M322.00 373.0V389.8M324.67 371.8V382.8M327.33 379.6V382.8M330.00 376.1V381.0M332.67 373.2V379.3M335.33 373.7V382.8M338.00 370.6V382.1M340.67 367.1V376.5M343.33 360.1V372.8M346.00 356.4V366.9M348.67 356.4V368.1M351.33 359.1V367.6M354.00 359.9V376.1M356.67 369.9V380.1M359.33 372.9V384.5M362.00 380.7V398.0M364.67 368.8V388.3M367.33 370.4V375.5M370.00 368.1V372.0M372.67 367.5V377.5M375.33 357.2V371.6M378.00 361.1V366.2M380.67 365.3V373.1M383.33 364.3V374.2M386.00 365.5V375.0M388.67 357.9V378.5M391.33 357.4V368.8M394.00 368.0V398.0M396.67 375.2V387.8M399.33 383.5V389.2M402.00 379.8V390.8M404.67 378.8V385.7M407.33 380.7V392.6M410.00 385.6V410.0M412.67 377.7V393.5M415.33 369.5V386.2M418.00 364.4V373.7M420.67 355.0V370.8M423.33 349.6V358.9M426.00 341.8V353.4M428.67 342.1V361.6M431.33 357.6V371.4M434.00 365.1V375.0M436.67 363.0V370.0M439.33 359.7V374.7M442.00 358.2V370.7M444.67 359.0V367.7M447.33 359.7V368.6M450.00 358.1V365.9M452.67 357.0V362.8M455.33 354.7V365.4M458.00 361.7V380.0M460.67 368.9V386.3M463.33 373.2V383.4M466.00 372.6V377.0M468.67 362.6V374.5M471.33 361.6V373.5M474.00 357.7V367.4M476.67 357.7V363.9M479.33 355.7V364.6M482.00 346.2V363.3M484.67 349.0V363.8M487.33 330.3V363.5M490.00 322.2V340.2M492.67 314.6V325.7M495.33 311.2V317.7M498.00 309.1V315.1M500.67 303.1V310.2M503.33 303.1V309.8M506.00 304.6V314.6M508.67 311.3V315.0M511.33 301.5V319.5M514.00 293.9V307.6M516.67 279.6V300.8M519.33 286.7V294.1M522.00 280.1V290.1M524.67 277.1V288.0M527.33 283.2V292.2M530.00 281.7V290.2M532.67 277.4V286.5M535.33 277.8V284.4M538.00 261.4V284.4M540.67 256.0V278.4M543.33 233.5V260.0M546.00 218.2V237.5M548.67 211.8V225.1M551.33 189.0V217.7M554.00 207.0V220.6M556.67 215.8V233.1M559.33 225.8V233.7M562.00 227.2V233.9M564.67 229.2V237.7M567.33 224.0V238.6M570.00 227.1V234.9M572.67 222.6V237.3M575.33 219.7V227.7M578.00 206.1V223.8M580.67 201.8V212.6M583.33 204.3V262.0M586.00 242.1V264.0M588.67 255.8V265.0M591.33 260.9V269.6M594.00 263.5V270.2M596.67 268.5V272.5M599.33 263.4V273.5M602.00 250.0V268.0M604.67 262.3V267.4M607.33 264.8V276.2M610.00 274.3V286.6M612.67 283.1V308.0M615.33 279.0V293.3M618.00 272.2V282.4M620.67 258.5V276.1M623.33 242.0V261.9M626.00 250.9V256.2M628.67 253.2V267.5M631.33 258.8V271.8M634.00 261.6V267.9M636.67 264.4V282.3M639.33 274.6V281.0M642.00 268.4V281.8M644.67 266.1V272.0M647.33 268.7V274.0M650.00 272.9V277.4M652.67 270.9V276.9M655.33 266.7V279.4M658.00 267.3V274.2M660.67 250.5V270.9M663.33 237.3V255.6M666.00 234.7V242.3M668.67 233.9V236.8M671.33 230.4V238.4M674.00 236.2V241.5M676.67 232.0V244.6M679.33 225.0V236.6M682.00 201.5V233.8M684.67 212.0V222.1M687.33 217.1V227.9M690.00 226.0V229.0M692.67 225.5V235.5M695.33 230.5V238.8M698.00 232.3V252.8M700.67 245.8V252.4M703.33 247.1V255.0M706.00 250.3V258.6M708.67 251.9V263.0M711.33 255.1V262.7M714.00 251.8V256.4M716.67 246.9V257.6M719.33 247.0V257.6M722.00 248.0V253.9M724.67 247.7V252.3M727.33 242.9V249.4M730.00 245.7V251.6M732.67 247.9V256.0M735.33 251.0V255.1M738.00 239.9V254.4M740.67 232.0V246.7M743.33 240.1V253.1M746.00 242.3V257.2M748.67 252.8V264.4M751.33 261.9V279.5M754.00 270.8V295.5M756.67 289.5V308.6M759.33 301.8V322.0M762.00 312.1V318.8M764.67 313.3V324.0M767.33 318.8V325.6M770.00 317.5V322.5M772.67 314.7V321.0M775.33 304.9V316.8M778.00 302.8V310.2M780.67 298.2V307.0M783.33 298.6V308.4M786.00 295.3V301.0M788.67 286.1V298.2M791.33 290.7V297.1M794.00 287.1V295.1M796.67 286.9V290.9M799.33 288.9V299.9M802.00 296.3V304.4M804.67 289.7V301.1M807.33 297.3V304.0M810.00 288.6V302.7M812.67 291.8V304.4M815.33 275.0V297.4M818.00 281.0V297.8M820.67 282.2V305.3M823.33 299.1V319.3M826.00 311.0V333.0M828.67 314.8V321.3M831.33 316.6V319.9M834.00 317.2V321.9M836.67 320.3V326.3M839.33 320.6V334.8M842.00 330.0V343.2M844.67 336.5V342.2M847.33 331.1V343.5M850.00 331.5V334.4M852.67 332.6V336.9M855.33 331.5V346.0M858.00 324.8V336.5M860.67 322.2V332.6M863.33 317.9V328.6M866.00 315.6V323.6M868.67 318.0V320.4M871.33 310.6V323.7M874.00 319.4V326.1M876.67 319.9V330.4M879.33 323.9V336.0M882.00 329.6V335.4M884.67 323.1V332.7M887.33 310.8V331.5M890.00 307.0V317.1M892.67 300.5V316.7M895.33 298.2V308.9M898.00 298.5V310.9M900.67 287.9V302.6M903.33 282.9V295.2M906.00 275.6V287.8M908.67 277.3V284.7M911.33 274.3V279.5M914.00 275.6V280.6M916.67 272.1V287.6M919.33 275.5V291.3M922.00 283.0V286.6M924.67 276.8V283.8M927.33 272.8V282.7M930.00 271.2V276.2M932.67 273.3V287.5M935.33 279.9V285.8M938.00 281.0V304.0M940.67 286.0V289.7M943.33 271.4V288.6M946.00 262.0V276.2M948.67 267.5V275.8M951.33 271.1V277.9M954.00 275.2V283.5M956.67 280.9V290.8M959.33 285.8V340.0M962.00 315.3V333.3M964.67 300.2V319.0M967.33 301.6V313.6M970.00 299.8V307.5M972.67 296.6V316.5M975.33 304.4V308.7M978.00 295.7V306.9M980.67 288.0V308.7M983.33 283.0V298.4M986.00 297.0V312.6M988.67 303.8V312.6M991.33 306.9V320.5M994.00 311.1V330.0M996.67 326.0V333.7M999.33 320.0V332.4M1002.00 314.2V322.2M1004.67 282.8V319.3M1007.33 263.7V287.1M1010.00 246.7V269.0M1012.67 233.9V248.7M1015.33 236.4V242.1M1018.00 233.1V239.4M1020.67 232.4V242.0M1023.33 230.2V234.5M1026.00 222.8V233.3M1028.67 215.9V226.2M1031.33 212.1V220.9M1034.00 210.0V219.7M1036.67 207.7V215.0M1039.33 209.0V214.9M1042.00 203.6V210.3M1044.67 205.3V210.3M1047.33 204.5V211.6M1050.00 195.0V210.6M1052.67 206.5V215.8M1055.33 209.6V216.0M1058.00 210.6V214.8M1060.67 205.3V219.7M1063.33 206.4V227.6M1066.00 205.2V230.0M1068.67 202.7V213.4M1071.33 199.7V205.1M1074.00 180.0V203.0M1076.67 192.3V202.9M1079.33 194.3V199.2M1082.00 196.0V201.0M1084.67 194.5V212.0M1087.33 198.9V209.6M1090.00 202.9V210.3M1092.67 195.5V210.5M1095.33 186.9V201.5M1098.00 186.5V198.9M1100.67 191.2V199.1M1103.33 191.7V203.9M1106.00 197.9V204.3M1108.67 202.0V205.9M1111.33 197.9V214.0M1114.00 203.9V209.9M1116.67 207.4V212.4M1119.33 206.3V218.8M1122.00 207.0V212.4M1124.67 209.6V215.4M1127.33 209.4V218.6M1130.00 207.0V218.5M1132.67 192.2V214.3M1135.33 189.1V197.7M1138.00 168.0V200.2M1140.67 181.8V195.3M1143.33 167.5V186.7M1146.00 159.3V174.8M1148.67 155.6V164.8M1151.33 155.3V170.0M1154.00 163.0V168.1M1156.67 156.0V172.0M1159.33 140.7V159.3M1162.00 137.3V147.9M1164.67 137.0V143.9M1167.33 130.3V144.8M1170.00 131.7V145.6M1172.67 139.8V141.9M1175.33 126.9V145.1M1178.00 120.4V127.8M1180.67 91.0V127.0M1183.33 100.0V108.3M1186.00 102.6V114.2M1188.67 108.7V127.7M1191.33 124.5V138.0M1194.00 118.7V134.3M1196.67 117.5V127.4M1199.33 115.0V121.7M1202.00 94.8V126.3M1204.67 100.8V111.2M1207.33 98.4V109.5M1210.00 101.7V127.1M1212.67 119.3V134.4M1215.33 128.3V146.4M1218.00 139.1V142.3M1220.67 135.8V143.2M1223.33 133.5V141.1M1226.00 124.7V136.8M1228.67 121.9V131.2M1231.33 121.3V133.0M1234.00 123.6V135.9M1236.67 128.8V141.4M1239.33 114.3V140.2M1242.00 106.0V120.3M1244.67 112.7V118.2M1247.33 114.4V123.1" stroke="#2abc2a" stroke-width="0.8" fill="none"/><path d="M168.90 384.4h2.2V385.6h-2.2zM171.57 359.3h2.2V384.4h-2.2zM176.90 360.6h2.2V362.6h-2.2zM179.57 360.0h2.2V361.2h-2.2zM190.23 374.9h2.2V376.1h-2.2zM192.90 374.6h2.2V375.8h-2.2zM195.57 365.6h2.2V374.6h-2.2zM198.23 363.2h2.2V365.6h-2.2zM211.57 379.7h2.2V381.1h-2.2zM214.23 378.2h2.2V379.7h-2.2zM219.57 375.9h2.2V378.2h-2.2zM222.23 374.3h2.2V375.9h-2.2zM224.90 366.4h2.2V374.3h-2.2zM230.23 344.1h2.2V368.7h-2.2zM232.90 313.6h2.2V344.1h-2.2zM248.90 346.5h2.2V353.7h-2.2zM251.57 344.4h2.2V346.5h-2.2zM254.23 343.1h2.2V344.4h-2.2zM259.57 341.6h2.2V343.4h-2.2zM272.90 349.9h2.2V351.4h-2.2zM288.90 370.2h2.2V373.2h-2.2zM291.57 368.5h2.2V370.2h-2.2zM302.23 395.9h2.2V397.1h-2.2zM304.90 395.3h2.2V396.5h-2.2zM307.57 392.6h2.2V395.3h-2.2zM310.23 390.7h2.2V392.6h-2.2zM312.90 390.3h2.2V391.5h-2.2zM318.23 384.9h2.2V391.8h-2.2zM320.90 376.8h2.2V384.9h-2.2zM326.23 380.4h2.2V381.9h-2.2zM328.90 376.8h2.2V380.4h-2.2zM336.90 371.3h2.2V379.5h-2.2zM339.57 369.4h2.2V371.3h-2.2zM342.23 362.4h2.2V369.4h-2.2zM344.90 361.4h2.2V362.6h-2.2zM350.23 363.0h2.2V364.8h-2.2zM363.57 372.8h2.2V383.2h-2.2zM366.23 371.3h2.2V372.8h-2.2zM368.90 368.8h2.2V371.3h-2.2zM371.57 368.6h2.2V369.8h-2.2zM374.23 363.4h2.2V368.6h-2.2zM382.23 367.9h2.2V369.1h-2.2zM387.57 361.6h2.2V371.9h-2.2zM398.23 387.0h2.2V388.2h-2.2zM400.90 381.9h2.2V387.0h-2.2zM403.57 381.0h2.2V382.2h-2.2zM411.57 381.0h2.2V391.4h-2.2zM414.23 372.2h2.2V381.0h-2.2zM416.90 368.5h2.2V372.2h-2.2zM419.57 357.8h2.2V368.5h-2.2zM422.23 352.2h2.2V357.8h-2.2zM424.90 344.9h2.2V352.2h-2.2zM438.23 366.3h2.2V368.7h-2.2zM443.57 365.4h2.2V367.0h-2.2zM446.23 362.9h2.2V365.4h-2.2zM448.90 359.3h2.2V362.9h-2.2zM451.57 357.9h2.2V359.3h-2.2zM462.23 375.1h2.2V377.7h-2.2zM464.90 373.2h2.2V375.1h-2.2zM467.57 366.3h2.2V373.2h-2.2zM470.23 366.2h2.2V367.4h-2.2zM472.90 360.1h2.2V366.2h-2.2zM475.57 359.3h2.2V360.5h-2.2zM480.90 351.9h2.2V359.9h-2.2zM486.23 337.5h2.2V360.8h-2.2zM488.90 324.1h2.2V337.5h-2.2zM491.57 316.4h2.2V324.1h-2.2zM494.23 312.1h2.2V316.4h-2.2zM496.90 309.6h2.2V312.1h-2.2zM499.57 303.4h2.2V309.6h-2.2zM510.23 304.9h2.2V313.1h-2.2zM512.90 297.1h2.2V304.9h-2.2zM515.57 288.3h2.2V297.1h-2.2zM518.23 288.2h2.2V289.4h-2.2zM520.90 282.1h2.2V288.2h-2.2zM528.90 285.2h2.2V286.4h-2.2zM531.57 280.0h2.2V285.2h-2.2zM536.90 269.8h2.2V280.1h-2.2zM539.57 256.6h2.2V269.8h-2.2zM542.23 236.6h2.2V256.6h-2.2zM544.90 222.2h2.2V236.6h-2.2zM547.57 215.7h2.2V222.2h-2.2zM550.23 207.5h2.2V215.7h-2.2zM560.90 229.7h2.2V231.8h-2.2zM566.23 230.2h2.2V236.7h-2.2zM571.57 225.4h2.2V234.0h-2.2zM574.23 220.1h2.2V225.4h-2.2zM576.90 212.2h2.2V220.1h-2.2zM579.57 206.6h2.2V212.2h-2.2zM598.23 266.0h2.2V272.0h-2.2zM603.57 265.8h2.2V267.0h-2.2zM614.23 279.8h2.2V292.8h-2.2zM616.90 273.4h2.2V279.8h-2.2zM619.57 260.0h2.2V273.4h-2.2zM622.23 252.8h2.2V260.0h-2.2zM630.23 262.7h2.2V263.9h-2.2zM640.90 270.3h2.2V278.1h-2.2zM643.57 269.7h2.2V270.9h-2.2zM648.90 273.3h2.2V274.5h-2.2zM651.57 273.1h2.2V274.3h-2.2zM654.23 272.6h2.2V273.8h-2.2zM656.90 268.5h2.2V272.6h-2.2zM659.57 253.0h2.2V268.5h-2.2zM662.23 239.8h2.2V253.0h-2.2zM664.90 235.1h2.2V239.8h-2.2zM667.57 234.4h2.2V235.6h-2.2zM675.57 232.5h2.2V238.7h-2.2zM678.23 229.7h2.2V232.5h-2.2zM680.90 212.5h2.2V229.7h-2.2zM688.90 226.5h2.2V227.7h-2.2zM699.57 249.1h2.2V251.0h-2.2zM710.23 255.9h2.2V261.0h-2.2zM712.90 253.3h2.2V255.9h-2.2zM718.23 250.6h2.2V254.0h-2.2zM720.90 250.4h2.2V251.6h-2.2zM723.57 249.0h2.2V250.4h-2.2zM726.23 247.7h2.2V249.0h-2.2zM734.23 253.1h2.2V254.3h-2.2zM736.90 245.2h2.2V253.1h-2.2zM768.90 319.5h2.2V320.7h-2.2zM771.57 315.3h2.2V319.5h-2.2zM774.23 309.6h2.2V315.3h-2.2zM776.90 305.5h2.2V309.6h-2.2zM779.57 303.3h2.2V305.5h-2.2zM782.23 299.5h2.2V303.3h-2.2zM784.90 297.8h2.2V299.5h-2.2zM787.57 292.7h2.2V297.8h-2.2zM792.90 289.4h2.2V293.3h-2.2zM800.90 297.5h2.2V298.7h-2.2zM808.90 295.6h2.2V300.4h-2.2zM811.57 294.1h2.2V295.6h-2.2zM814.23 286.6h2.2V294.1h-2.2zM827.57 317.1h2.2V319.0h-2.2zM846.23 331.9h2.2V338.3h-2.2zM854.23 331.9h2.2V334.4h-2.2zM856.90 327.3h2.2V331.9h-2.2zM859.57 322.9h2.2V327.3h-2.2zM862.23 320.6h2.2V322.9h-2.2zM864.90 319.8h2.2V321.0h-2.2zM867.57 318.5h2.2V319.8h-2.2zM880.90 332.1h2.2V333.3h-2.2zM883.57 326.2h2.2V332.1h-2.2zM886.23 312.8h2.2V326.2h-2.2zM888.90 308.5h2.2V312.8h-2.2zM891.57 304.9h2.2V308.5h-2.2zM896.90 301.9h2.2V308.4h-2.2zM899.57 291.6h2.2V301.9h-2.2zM902.23 286.7h2.2V291.6h-2.2zM904.90 282.1h2.2V286.7h-2.2zM907.57 279.1h2.2V282.1h-2.2zM910.23 275.9h2.2V279.1h-2.2zM918.23 283.8h2.2V285.0h-2.2zM920.90 283.4h2.2V284.6h-2.2zM923.57 278.6h2.2V283.4h-2.2zM926.23 274.1h2.2V278.6h-2.2zM939.57 287.7h2.2V288.9h-2.2zM942.23 274.2h2.2V287.7h-2.2zM944.90 272.2h2.2V274.2h-2.2zM960.90 316.5h2.2V332.0h-2.2zM963.57 304.7h2.2V316.5h-2.2zM968.90 304.0h2.2V305.2h-2.2zM974.23 306.3h2.2V308.1h-2.2zM976.90 302.9h2.2V306.3h-2.2zM979.57 291.0h2.2V302.9h-2.2zM998.23 320.8h2.2V330.5h-2.2zM1000.90 317.5h2.2V320.8h-2.2zM1003.57 285.9h2.2V317.5h-2.2zM1006.23 266.5h2.2V285.9h-2.2zM1008.90 247.5h2.2V266.5h-2.2zM1011.57 237.7h2.2V247.5h-2.2zM1014.23 237.4h2.2V238.6h-2.2zM1016.90 233.8h2.2V237.4h-2.2zM1022.23 231.6h2.2V234.2h-2.2zM1024.90 224.0h2.2V231.6h-2.2zM1027.57 218.6h2.2V224.0h-2.2zM1030.23 216.1h2.2V218.6h-2.2zM1032.90 212.4h2.2V216.1h-2.2zM1038.23 209.5h2.2V214.1h-2.2zM1040.90 205.8h2.2V209.5h-2.2zM1048.90 207.3h2.2V209.4h-2.2zM1062.23 209.8h2.2V218.8h-2.2zM1064.90 205.9h2.2V209.8h-2.2zM1067.57 204.7h2.2V205.9h-2.2zM1070.23 201.2h2.2V204.7h-2.2zM1072.90 194.2h2.2V201.2h-2.2zM1091.57 198.1h2.2V207.4h-2.2zM1094.23 193.0h2.2V198.1h-2.2zM1099.57 192.2h2.2V196.4h-2.2zM1118.23 208.9h2.2V211.7h-2.2zM1128.90 211.5h2.2V216.4h-2.2zM1131.57 195.0h2.2V211.5h-2.2zM1136.90 192.9h2.2V197.3h-2.2zM1139.57 186.1h2.2V192.9h-2.2zM1142.23 172.4h2.2V186.1h-2.2zM1144.90 160.7h2.2V172.4h-2.2zM1152.90 165.3h2.2V166.5h-2.2zM1155.57 158.3h2.2V165.3h-2.2zM1158.23 142.6h2.2V158.3h-2.2zM1160.90 141.8h2.2V143.0h-2.2zM1163.57 138.1h2.2V141.8h-2.2zM1166.23 133.1h2.2V138.1h-2.2zM1174.23 127.4h2.2V141.3h-2.2zM1176.90 122.2h2.2V127.4h-2.2zM1179.57 107.0h2.2V122.2h-2.2zM1182.23 106.2h2.2V107.4h-2.2zM1192.90 119.4h2.2V133.8h-2.2zM1195.57 118.1h2.2V119.4h-2.2zM1200.90 106.3h2.2V119.0h-2.2zM1203.57 104.7h2.2V106.3h-2.2zM1219.57 140.7h2.2V141.9h-2.2zM1222.23 134.8h2.2V140.7h-2.2zM1224.90 129.2h2.2V134.8h-2.2zM1227.57 126.1h2.2V129.2h-2.2zM1238.23 115.3h2.2V139.4h-2.2zM1240.90 114.8h2.2V116.0h-2.2z" fill="#1cd01c"/><path d="M174.23 359.3h2.2V362.6h-2.2zM182.23 360.0h2.2V370.3h-2.2zM184.90 370.3h2.2V371.5h-2.2zM187.57 371.2h2.2V375.0h-2.2zM200.90 363.2h2.2V365.6h-2.2zM203.57 365.6h2.2V375.0h-2.2zM206.23 375.0h2.2V377.0h-2.2zM208.90 377.0h2.2V381.1h-2.2zM216.90 378.2h2.2V379.4h-2.2zM227.57 366.4h2.2V368.7h-2.2zM235.57 313.6h2.2V321.2h-2.2zM238.23 321.2h2.2V344.2h-2.2zM240.90 344.2h2.2V351.1h-2.2zM243.57 351.1h2.2V352.3h-2.2zM246.23 351.6h2.2V353.7h-2.2zM256.90 343.1h2.2V344.3h-2.2zM262.23 341.6h2.2V343.6h-2.2zM264.90 343.6h2.2V346.7h-2.2zM267.57 346.7h2.2V350.2h-2.2zM270.23 350.2h2.2V351.4h-2.2zM275.57 349.9h2.2V353.5h-2.2zM278.23 353.5h2.2V361.7h-2.2zM280.90 361.7h2.2V364.5h-2.2zM283.57 364.5h2.2V370.3h-2.2zM286.23 370.3h2.2V373.2h-2.2zM294.23 368.5h2.2V386.6h-2.2zM296.90 386.6h2.2V391.4h-2.2zM299.57 391.4h2.2V396.3h-2.2zM315.57 390.3h2.2V391.8h-2.2zM323.57 376.8h2.2V381.9h-2.2zM331.57 376.8h2.2V378.0h-2.2zM334.23 377.6h2.2V379.5h-2.2zM347.57 361.4h2.2V364.8h-2.2zM352.90 363.0h2.2V370.8h-2.2zM355.57 370.8h2.2V373.5h-2.2zM358.23 373.5h2.2V382.3h-2.2zM360.90 382.3h2.2V383.5h-2.2zM376.90 363.4h2.2V365.8h-2.2zM379.57 365.8h2.2V368.5h-2.2zM384.90 367.9h2.2V371.9h-2.2zM390.23 361.6h2.2V368.4h-2.2zM392.90 368.4h2.2V381.2h-2.2zM395.57 381.2h2.2V387.4h-2.2zM406.23 381.0h2.2V389.7h-2.2zM408.90 389.7h2.2V391.4h-2.2zM427.57 344.9h2.2V358.9h-2.2zM430.23 358.9h2.2V366.9h-2.2zM432.90 366.9h2.2V368.1h-2.2zM435.57 367.5h2.2V368.7h-2.2zM440.90 366.3h2.2V367.5h-2.2zM454.23 357.9h2.2V364.7h-2.2zM456.90 364.7h2.2V371.2h-2.2zM459.57 371.2h2.2V377.7h-2.2zM478.23 359.3h2.2V360.5h-2.2zM483.57 351.9h2.2V360.8h-2.2zM502.23 303.4h2.2V308.9h-2.2zM504.90 308.9h2.2V312.9h-2.2zM507.57 312.9h2.2V314.1h-2.2zM523.57 282.1h2.2V285.4h-2.2zM526.23 285.4h2.2V286.6h-2.2zM534.23 280.0h2.2V281.2h-2.2zM552.90 207.5h2.2V219.5h-2.2zM555.57 219.5h2.2V230.8h-2.2zM558.23 230.8h2.2V232.0h-2.2zM563.57 229.7h2.2V236.7h-2.2zM568.90 230.2h2.2V234.0h-2.2zM582.23 206.6h2.2V246.2h-2.2zM584.90 246.2h2.2V259.5h-2.2zM587.57 259.5h2.2V261.2h-2.2zM590.23 261.2h2.2V267.7h-2.2zM592.90 267.7h2.2V269.8h-2.2zM595.57 269.8h2.2V272.0h-2.2zM600.90 266.0h2.2V267.2h-2.2zM606.23 265.8h2.2V275.4h-2.2zM608.90 275.4h2.2V285.3h-2.2zM611.57 285.3h2.2V292.8h-2.2zM624.90 252.8h2.2V254.5h-2.2zM627.57 254.5h2.2V263.7h-2.2zM632.90 262.7h2.2V265.7h-2.2zM635.57 265.7h2.2V277.9h-2.2zM638.23 277.9h2.2V279.1h-2.2zM646.23 269.7h2.2V273.7h-2.2zM670.23 234.4h2.2V236.5h-2.2zM672.90 236.5h2.2V238.7h-2.2zM683.57 212.5h2.2V220.8h-2.2zM686.23 220.8h2.2V227.5h-2.2zM691.57 226.5h2.2V232.3h-2.2zM694.23 232.3h2.2V233.5h-2.2zM696.90 233.0h2.2V251.0h-2.2zM702.23 249.1h2.2V252.8h-2.2zM704.90 252.8h2.2V258.2h-2.2zM707.57 258.2h2.2V261.0h-2.2zM715.57 253.3h2.2V254.5h-2.2zM728.90 247.7h2.2V251.0h-2.2zM731.57 251.0h2.2V253.6h-2.2zM739.57 245.2h2.2V246.4h-2.2zM742.23 246.1h2.2V248.2h-2.2zM744.90 248.2h2.2V254.5h-2.2zM747.57 254.5h2.2V262.9h-2.2zM750.23 262.9h2.2V274.4h-2.2zM752.90 274.4h2.2V290.8h-2.2zM755.57 290.8h2.2V302.8h-2.2zM758.23 302.8h2.2V314.5h-2.2zM760.90 314.5h2.2V316.8h-2.2zM763.57 316.8h2.2V319.9h-2.2zM766.23 319.9h2.2V321.1h-2.2zM790.23 292.7h2.2V293.9h-2.2zM795.57 289.4h2.2V290.6h-2.2zM798.23 289.7h2.2V298.6h-2.2zM803.57 297.5h2.2V298.7h-2.2zM806.23 298.1h2.2V300.4h-2.2zM816.90 286.6h2.2V293.5h-2.2zM819.57 293.5h2.2V302.4h-2.2zM822.23 302.4h2.2V312.1h-2.2zM824.90 312.1h2.2V319.0h-2.2zM830.23 317.1h2.2V319.1h-2.2zM832.90 319.1h2.2V321.1h-2.2zM835.57 321.1h2.2V322.3h-2.2zM838.23 322.3h2.2V331.4h-2.2zM840.90 331.4h2.2V337.8h-2.2zM843.57 337.8h2.2V339.0h-2.2zM848.90 331.9h2.2V333.2h-2.2zM851.57 333.2h2.2V334.4h-2.2zM870.23 318.5h2.2V321.2h-2.2zM872.90 321.2h2.2V322.4h-2.2zM875.57 322.0h2.2V329.2h-2.2zM878.23 329.2h2.2V333.3h-2.2zM894.23 304.9h2.2V308.4h-2.2zM912.90 275.9h2.2V277.9h-2.2zM915.57 277.9h2.2V284.8h-2.2zM928.90 274.1h2.2V275.3h-2.2zM931.57 275.0h2.2V283.0h-2.2zM934.23 283.0h2.2V284.2h-2.2zM936.90 284.0h2.2V288.7h-2.2zM947.57 272.2h2.2V274.2h-2.2zM950.23 274.2h2.2V277.4h-2.2zM952.90 277.4h2.2V282.3h-2.2zM955.57 282.3h2.2V286.6h-2.2zM958.23 286.6h2.2V332.0h-2.2zM966.23 304.7h2.2V305.9h-2.2zM971.57 304.0h2.2V308.1h-2.2zM982.23 291.0h2.2V297.6h-2.2zM984.90 297.6h2.2V307.9h-2.2zM987.57 307.9h2.2V310.0h-2.2zM990.23 310.0h2.2V318.7h-2.2zM992.90 318.7h2.2V328.7h-2.2zM995.57 328.7h2.2V330.5h-2.2zM1019.57 233.8h2.2V235.0h-2.2zM1035.57 212.4h2.2V214.1h-2.2zM1043.57 205.8h2.2V207.7h-2.2zM1046.23 207.7h2.2V209.4h-2.2zM1051.57 207.3h2.2V209.9h-2.2zM1054.23 209.9h2.2V212.6h-2.2zM1056.90 212.6h2.2V213.9h-2.2zM1059.57 213.9h2.2V218.8h-2.2zM1075.57 194.2h2.2V195.4h-2.2zM1078.23 195.2h2.2V196.4h-2.2zM1080.90 196.4h2.2V198.7h-2.2zM1083.57 198.7h2.2V205.4h-2.2zM1086.23 205.4h2.2V206.6h-2.2zM1088.90 206.2h2.2V207.4h-2.2zM1096.90 193.0h2.2V196.4h-2.2zM1102.23 192.2h2.2V200.1h-2.2zM1104.90 200.1h2.2V203.3h-2.2zM1107.57 203.3h2.2V204.5h-2.2zM1110.23 204.1h2.2V206.7h-2.2zM1112.90 206.7h2.2V209.5h-2.2zM1115.57 209.5h2.2V211.7h-2.2zM1120.90 208.9h2.2V210.4h-2.2zM1123.57 210.4h2.2V212.1h-2.2zM1126.23 212.1h2.2V216.4h-2.2zM1134.23 195.0h2.2V197.3h-2.2zM1147.57 160.7h2.2V162.5h-2.2zM1150.23 162.5h2.2V165.9h-2.2zM1168.90 133.1h2.2V140.3h-2.2zM1171.57 140.3h2.2V141.5h-2.2zM1184.90 106.2h2.2V112.7h-2.2zM1187.57 112.7h2.2V127.0h-2.2zM1190.23 127.0h2.2V133.8h-2.2zM1198.23 118.1h2.2V119.3h-2.2zM1206.23 104.7h2.2V108.0h-2.2zM1208.90 108.0h2.2V122.0h-2.2zM1211.57 122.0h2.2V132.9h-2.2zM1214.23 132.9h2.2V139.9h-2.2zM1216.90 139.9h2.2V141.5h-2.2zM1230.23 126.1h2.2V129.8h-2.2zM1232.90 129.8h2.2V133.0h-2.2zM1235.57 133.0h2.2V139.4h-2.2zM1243.57 114.8h2.2V116.0h-2.2zM1246.23 115.5h2.2V122.7h-2.2z" fill="#3cff3c"/><path d="M168.3 73.4H1254.3M168.4 73V419.5" stroke="#9a9a9a" stroke-width="0.9" fill="none"/><path d="M1254.3 73V419.5M168.3 419.1H1254.6" stroke="#e8e8e8" stroke-width="0.9" fill="none"/><path d="M1254 87.20h2.5M1254 109.20h2.5M1254 131.20h2.5M1254 153.20h2.5M1254 175.20h2.5M1254 197.20h2.5M1254 219.20h2.5M1254 241.20h2.5M1254 263.20h2.5M1254 285.20h2.5M1254 307.20h2.5M1254 329.20h2.5M1254 351.20h2.5M1254 373.20h2.5M1254 395.20h2.5M1254 417.20h2.5M169.00 419v3M211.67 419v3M254.33 419v3M297.00 419v3M339.67 419v3M382.33 419v3M425.00 419v3M467.67 419v3M510.33 419v3M553.00 419v3M595.67 419v3M638.33 419v3M681.00 419v3M723.67 419v3M766.33 419v3M809.00 419v3M851.67 419v3M894.33 419v3M937.00 419v3M979.67 419v3M1022.33 419v3M1065.00 419v3M1107.67 419v3M1150.33 419v3M1193.00 419v3M1235.67 419v3" stroke="#e8e8e8" stroke-width="0.9"/><text x="1258" y="89.5" font-size="6.2" fill="#fff" font-family='"Liberation Sans","Noto Sans CJK SC",sans-serif'>1.17485</text><text x="1258" y="111.5" font-size="6.2" fill="#fff" font-family='"Liberation Sans","Noto Sans CJK SC",sans-serif'>1.17230</text><text x="1258" y="133.5" font-size="6.2" fill="#fff" font-family='"Liberation Sans","Noto Sans CJK SC",sans-serif'>1.16975</text><text x="1258" y="155.5" font-size="6.2" fill="#fff" font-family='"Liberation Sans","Noto Sans CJK SC",sans-serif'>1.16715</text><text x="1258" y="177.5" font-size="6.2" fill="#fff" font-family='"Liberation Sans","Noto Sans CJK SC",sans-serif'>1.16460</text><text x="1258" y="199.5" font-size="6.2" fill="#fff" font-family='"Liberation Sans","Noto Sans CJK SC",sans-serif'>1.16205</text><text x="1258" y="221.5" font-size="6.2" fill="#fff" font-family='"Liberation Sans","Noto Sans CJK SC",sans-serif'>1.15945</text><text x="1258" y="243.5" font-size="6.2" fill="#fff" font-family='"Liberation Sans","Noto Sans CJK SC",sans-serif'>1.15690</text><text x="1258" y="265.5" font-size="6.2" fill="#fff" font-family='"Liberation Sans","Noto Sans CJK SC",sans-serif'>1.15435</text><text x="1258" y="287.5" font-size="6.2" fill="#fff" font-family='"Liberation Sans","Noto Sans CJK SC",sans-serif'>1.15180</text><text x="1258" y="309.5" font-size="6.2" fill="#fff" font-family='"Liberation Sans","Noto Sans CJK SC",sans-serif'>1.14920</text><text x="1258" y="331.5" font-size="6.2" fill="#fff" font-family='"Liberation Sans","Noto Sans CJK SC",sans-serif'>1.14665</text><text x="1258" y="353.5" font-size="6.2" fill="#fff" font-family='"Liberation Sans","Noto Sans CJK SC",sans-serif'>1.14410</text><text x="1258" y="375.5" font-size="6.2" fill="#fff" font-family='"Liberation Sans","Noto Sans CJK SC",sans-serif'>1.14150</text><text x="1258" y="397.5" font-size="6.2" fill="#fff" font-family='"Liberation Sans","Noto Sans CJK SC",sans-serif'>1.13895</text><text x="1258" y="419.5" font-size="6.2" fill="#fff" font-family='"Liberation Sans","Noto Sans CJK SC",sans-serif'>1.13640</text><rect x="1255" y="119.2" width="25" height="7.4" fill="#fff"/><text x="1258" y="125.2" font-size="6.2" fill="#000" font-family='"Liberation Sans","Noto Sans CJK SC",sans-serif'>1.17074</text><text x="169.0" y="428.3" font-size="6.05" fill="#fff" font-family='"Liberation Sans","Noto Sans CJK SC",sans-serif'>4 Jun 2025</text><text x="211.7" y="428.3" font-size="6.05" fill="#fff" font-family='"Liberation Sans","Noto Sans CJK SC",sans-serif'>5 Jun 08:00</text><text x="254.3" y="428.3" font-size="6.05" fill="#fff" font-family='"Liberation Sans","Noto Sans CJK SC",sans-serif'>6 Jun 00:00</text><text x="297.0" y="428.3" font-size="6.05" fill="#fff" font-family='"Liberation Sans","Noto Sans CJK SC",sans-serif'>6 Jun 16:00</text><text x="339.7" y="428.3" font-size="6.05" fill="#fff" font-family='"Liberation Sans","Noto Sans CJK SC",sans-serif'>9 Jun 08:00</text><text x="382.3" y="428.3" font-size="6.05" fill="#fff" font-family='"Liberation Sans","Noto Sans CJK SC",sans-serif'>10 Jun 00:00</text><text x="425.0" y="428.3" font-size="6.05" fill="#fff" font-family='"Liberation Sans","Noto Sans CJK SC",sans-serif'>10 Jun 16:00</text><text x="467.7" y="428.3" font-size="6.05" fill="#fff" font-family='"Liberation Sans","Noto Sans CJK SC",sans-serif'>11 Jun 08:00</text><text x="510.3" y="428.3" font-size="6.05" fill="#fff" font-family='"Liberation Sans","Noto Sans CJK SC",sans-serif'>12 Jun 00:00</text><text x="553.0" y="428.3" font-size="6.05" fill="#fff" font-family='"Liberation Sans","Noto Sans CJK SC",sans-serif'>12 Jun 16:00</text><text x="595.7" y="428.3" font-size="6.05" fill="#fff" font-family='"Liberation Sans","Noto Sans CJK SC",sans-serif'>13 Jun 08:00</text><text x="638.3" y="428.3" font-size="6.05" fill="#fff" font-family='"Liberation Sans","Noto Sans CJK SC",sans-serif'>16 Jun 00:00</text><text x="681.0" y="428.3" font-size="6.05" fill="#fff" font-family='"Liberation Sans","Noto Sans CJK SC",sans-serif'>16 Jun 16:00</text><text x="723.7" y="428.3" font-size="6.05" fill="#fff" font-family='"Liberation Sans","Noto Sans CJK SC",sans-serif'>17 Jun 08:00</text><text x="766.3" y="428.3" font-size="6.05" fill="#fff" font-family='"Liberation Sans","Noto Sans CJK SC",sans-serif'>18 Jun 00:00</text><text x="809.0" y="428.3" font-size="6.05" fill="#fff" font-family='"Liberation Sans","Noto Sans CJK SC",sans-serif'>18 Jun 16:00</text><text x="851.7" y="428.3" font-size="6.05" fill="#fff" font-family='"Liberation Sans","Noto Sans CJK SC",sans-serif'>19 Jun 08:00</text><text x="894.3" y="428.3" font-size="6.05" fill="#fff" font-family='"Liberation Sans","Noto Sans CJK SC",sans-serif'>20 Jun 00:00</text><text x="937.0" y="428.3" font-size="6.05" fill="#fff" font-family='"Liberation Sans","Noto Sans CJK SC",sans-serif'>20 Jun 16:00</text><text x="979.7" y="428.3" font-size="6.05" fill="#fff" font-family='"Liberation Sans","Noto Sans CJK SC",sans-serif'>23 Jun 08:00</text><text x="1022.3" y="428.3" font-size="6.05" fill="#fff" font-family='"Liberation Sans","Noto Sans CJK SC",sans-serif'>24 Jun 00:00</text><text x="1065.0" y="428.3" font-size="6.05" fill="#fff" font-family='"Liberation Sans","Noto Sans CJK SC",sans-serif'>24 Jun 16:00</text><text x="1107.7" y="428.3" font-size="6.05" fill="#fff" font-family='"Liberation Sans","Noto Sans CJK SC",sans-serif'>25 Jun 08:00</text><text x="1150.3" y="428.3" font-size="6.05" fill="#fff" font-family='"Liberation Sans","Noto Sans CJK SC",sans-serif'>26 Jun 00:00</text><text x="1193.0" y="428.3" font-size="6.05" fill="#fff" font-family='"Liberation Sans","Noto Sans CJK SC",sans-serif'>26 Jun 16:00</text><text x="1235.7" y="428.3" font-size="6.05" fill="#fff" font-family='"Liberation Sans","Noto Sans CJK SC",sans-serif'>27 Jun 08:00</text><text x="171.8" y="81" font-size="6.15" fill="#fff" font-family='"Liberation Sans","Noto Sans CJK SC",sans-serif'>EURUSD,H1&#160;&#160;1.17097 1.17103 1.17016 1.17074</text></svg><div class="a" style="left:166px;top:433px;width:1114px;height:15px;background:#f0f0f0;"></div><div class="a" style="left:166px;top:433px;width:74px;height:1px;background:#888;"></div><div class="a" style="left:300px;top:433px;width:980px;height:1px;background:#888;"></div><div class="a t " style="left:176.5px;top:435.3px;font-size:8.3px;line-height:10.3px;color:#8a8a8a;">AUDNZD,Daily</div><div class="a" style="left:239.5px;top:433px;width:61px;height:14px;background:#fff;border:1px solid #222;border-top:none;"></div><div class="a t " style="left:247px;top:435.3px;font-size:8.1px;line-height:10.1px;color:#111;">EURUSD,H1</div><svg class="a" style="left:1262px;top:437px" width="18" height="7" viewBox="0 0 18 7"><path d="M4.300 1L2 3.400 4.300 5.800zM15 1L17.300 3.400 15 5.800z" fill="#7a7a7a"/></svg><div class="a" style="left:6px;top:447px;width:160px;height:1px;background:#c8c8c8;"></div><div class="a" style="left:16.5px;top:450.3px;width:1264px;height:1px;background:#b8b8b8;"></div><div class="a" style="left:16.3px;top:450.3px;width:1px;height:215px;background:#c0c0c0;"></div><div class="a" style="left:6px;top:448px;width:160px;height:1px;background:#fcfcfc;"></div><div class="a" style="left:7px;top:451px;width:7.9px;height:230.7px;background:linear-gradient(180deg,#b9cfea,#a3bfe2);"></div><div class="a t " style="left:6.5px;top:450.5px;font-size:8px;line-height:10px;color:#111;font-weight:bold">×</div><div class="a" style="left:6px;top:450px;width:9.5px;height:9px;background:#f0f0f0;"></div><div class="a t " style="left:7px;top:449.5px;font-size:8px;line-height:10px;color:#111;font-weight:bold">×</div><div class="a t" style="left:6px;top:680.500px;font-size:7.300px;line-height:10px;color:#223;transform-origin:0 0;transform:rotate(-90deg);font-weight:bold">测试</div><div class="a" style="left:20px;top:453px;width:1233px;height:159px;background:#fff;"></div><div class="a" style="left:20px;top:616px;width:1233px;height:37px;background:#fff;"></div><svg class="a" style="left:0;top:0" width="1280" height="720" viewBox="0 0 1280 720"><path d="M40.00 453V612M40.00 616V653M61.33 453V612M61.33 616V653M82.67 453V612M82.67 616V653M104.00 453V612M104.00 616V653M125.33 453V612M125.33 616V653M146.67 453V612M146.67 616V653M168.00 453V612M168.00 616V653M189.33 453V612M189.33 616V653M210.67 453V612M210.67 616V653M232.00 453V612M232.00 616V653M253.33 453V612M253.33 616V653M274.67 453V612M274.67 616V653M296.00 453V612M296.00 616V653M317.33 453V612M317.33 616V653M338.67 453V612M338.67 616V653M360.00 453V612M360.00 616V653M381.33 453V612M381.33 616V653M402.67 453V612M402.67 616V653M424.00 453V612M424.00 616V653M445.33 453V612M445.33 616V653M466.67 453V612M466.67 616V653M488.00 453V612M488.00 616V653M509.33 453V612M509.33 616V653M530.67 453V612M530.67 616V653M552.00 453V612M552.00 616V653M573.33 453V612M573.33 616V653M594.67 453V612M594.67 616V653M616.00 453V612M616.00 616V653M637.33 453V612M637.33 616V653M658.67 453V612M658.67 616V653M680.00 453V612M680.00 616V653M701.33 453V612M701.33 616V653M722.67 453V612M722.67 616V653M744.00 453V612M744.00 616V653M765.33 453V612M765.33 616V653M786.67 453V612M786.67 616V653M808.00 453V612M808.00 616V653M829.33 453V612M829.33 616V653M850.67 453V612M850.67 616V653M872.00 453V612M872.00 616V653M893.33 453V612M893.33 616V653M914.67 453V612M914.67 616V653M936.00 453V612M936.00 616V653M957.33 453V612M957.33 616V653M978.67 453V612M978.67 616V653M1000.00 453V612M1000.00 616V653M1021.33 453V612M1021.33 616V653M1042.67 453V612M1042.67 616V653M1064.00 453V612M1064.00 616V653M1085.33 453V612M1085.33 616V653M1106.67 453V612M1106.67 616V653M1128.00 453V612M1128.00 616V653M1149.33 453V612M1149.33 616V653M1170.67 453V612M1170.67 616V653M1192.00 453V612M1192.00 616V653M1213.33 453V612M1213.33 616V653M1234.67 453V612M1234.67 616V653M20 463.70H1253M20 485.03H1253M20 506.37H1253M20 527.70H1253M20 549.03H1253M20 570.37H1253M20 591.70H1253" stroke="#c2c2c2" stroke-width="0.75" stroke-dasharray="2 2" fill="none"/><path d="M168 596.3H182.5M146 597.6H155M478 581.8H494M622 570.8H636M764 555.5H779M851 544.3H861.5M738 560.6H746M890 540.2H897M926 535.3H935M1126 498.5H1139L1142.5 495.5L1146 496.5M1236.5 469V611.5H1252" stroke="#3cbf3c" stroke-width="0.8" fill="none"/><path d="M20.0 600.8L106.0 598.6L108.8 597.9L111.5 598.5L146.0 597.5L150.0 596.3L152.5 595.5L155.0 597.0L168.0 596.5L169.5 593.0L171.5 591.2L178.0 591.2L180.0 593.0L182.5 595.5L320.0 590.8L344.0 590.0L347.0 587.8L349.0 587.5L352.0 589.2L405.0 587.0L408.0 585.3L410.8 584.5L414.0 586.3L477.5 583.2L479.0 578.0L481.5 574.3L483.8 573.2L486.0 574.5L493.8 581.2L575.0 577.0L595.0 574.5L601.0 573.2L603.8 572.0L606.0 572.8L610.0 572.6L612.5 571.8L615.0 572.5L621.2 572.5L623.0 567.0L625.5 564.3L627.5 563.8L630.0 564.8L635.5 570.0L640.0 569.5L685.0 565.6L687.5 564.6L690.0 565.2L724.0 562.6L726.0 561.8L729.0 562.0L738.0 560.8L739.5 558.8L742.0 558.0L745.0 558.6L746.5 560.2L763.8 559.5L765.0 548.0L767.0 543.0L768.8 541.2L770.5 542.5L778.8 554.5L806.0 551.0L809.0 549.0L811.0 548.8L814.0 550.0L840.0 548.0L851.0 546.0L852.5 541.5L854.0 538.8L858.8 538.8L860.0 541.0L861.5 543.8L890.0 540.8L892.0 537.8L893.8 536.8L895.5 537.8L897.5 539.5L926.0 535.8L929.0 533.5L931.0 533.0L933.0 534.8L936.0 534.5L960.0 528.8L965.0 529.5L1020.0 522.5L1023.8 520.5L1042.5 518.0L1060.0 514.5L1063.8 512.5L1095.0 508.2L1125.0 503.8L1126.2 487.5L1128.0 484.0L1130.5 482.5L1133.0 484.5L1135.0 487.5L1137.0 492.0L1138.8 497.5L1140.5 493.8L1144.5 492.5L1146.2 496.2L1150.0 492.5L1167.5 490.0L1172.5 486.2L1185.0 479.2L1197.5 476.2L1210.0 473.8L1236.2 468.8L1238.8 485.0L1241.0 500.0L1245.0 530.0L1248.5 575.0L1251.8 611.0" stroke="#1515a5" stroke-width="1.45" fill="none" stroke-linejoin="round"/><path d="M561.5 653v-0.4M564.6 653v-0.3M572.4 653v-0.5M573.9 653v-0.5M581.7 653v-0.6M583.2 653v-0.6M584.8 653v-0.5M586.3 653v-0.5M597.2 653v-0.6M598.7 653v-0.6M600.3 653v-0.7M603.4 653v-0.7M611.1 653v-0.7M612.7 653v-0.4M615.8 653v-0.5M622.0 653v-0.8M623.5 653v-0.6M631.3 653v-0.4M632.8 653v-0.5M639.0 653v-0.7M642.1 653v-0.6M649.9 653v-0.4M651.4 653v-0.7M653.0 653v-0.5M654.5 653v-0.7M656.1 653v-0.7M657.6 653v-0.8M659.2 653v-0.6M660.7 653v-0.8M662.3 653v-0.8M663.8 653v-0.5M665.4 653v-0.5M666.9 653v-0.8M668.5 653v-1.0M670.0 653v-0.6M671.6 653v-0.7M673.1 653v-0.8M674.7 653v-0.6M676.2 653v-0.7M677.8 653v-0.6M679.3 653v-0.7M680.9 653v-0.8M682.4 653v-0.7M684.0 653v-0.7M685.5 653v-0.9M687.1 653v-0.5M688.6 653v-0.8M690.2 653v-0.9M691.7 653v-0.7M693.3 653v-0.6M694.8 653v-1.0M696.4 653v-0.7M697.9 653v-0.6M699.5 653v-0.8M701.0 653v-0.9M702.6 653v-0.6M704.1 653v-0.7M705.7 653v-0.7M707.2 653v-1.0M708.8 653v-0.8M710.3 653v-1.0M711.9 653v-0.6M713.4 653v-0.7M715.0 653v-0.9M716.5 653v-1.1M718.1 653v-0.8M719.6 653v-0.7M721.2 653v-0.6M722.7 653v-0.9M724.3 653v-0.7M725.8 653v-1.1M727.4 653v-1.1M728.9 653v-0.7M730.5 653v-0.8M732.0 653v-1.1M733.6 653v-1.0M735.1 653v-1.1M736.7 653v-0.8M738.2 653v-0.7M739.8 653v-0.8M741.3 653v-1.1M742.9 653v-0.8M744.4 653v-0.8M746.0 653v-0.9M747.5 653v-0.9M749.1 653v-0.9M750.6 653v-1.2M752.2 653v-0.7M753.7 653v-0.6M755.3 653v-1.3M756.8 653v-1.2M758.4 653v-1.3M759.9 653v-0.9M761.5 653v-1.3M763.0 653v-1.3M764.6 653v-0.8M766.1 653v-1.2M767.7 653v-1.2M769.2 653v-1.1M770.8 653v-1.0M772.3 653v-0.9M773.9 653v-0.9M775.4 653v-0.8M777.0 653v-0.7M778.5 653v-1.1M780.1 653v-0.9M781.6 653v-1.3M783.2 653v-0.7M784.7 653v-1.3M786.3 653v-1.2M787.8 653v-1.4M789.4 653v-1.4M790.9 653v-1.4M792.5 653v-1.1M794.0 653v-0.7M795.6 653v-1.3M797.1 653v-0.8M798.7 653v-0.9M800.2 653v-1.2M801.8 653v-1.1M803.3 653v-1.0M804.9 653v-1.4M806.4 653v-1.2M808.0 653v-1.0M809.5 653v-0.9M811.1 653v-1.4M812.6 653v-1.1M814.2 653v-1.3M815.7 653v-1.0M817.3 653v-0.9M818.8 653v-1.2M820.4 653v-1.4M821.9 653v-0.9M823.5 653v-1.4M825.0 653v-1.5M826.6 653v-1.4M828.1 653v-1.4M829.7 653v-0.8M831.2 653v-1.3M832.8 653v-1.5M834.3 653v-0.8M835.9 653v-1.0M837.4 653v-1.0M839.0 653v-1.2M840.5 653v-1.1M842.1 653v-1.2M843.6 653v-1.4M845.2 653v-0.8M846.7 653v-0.8M848.3 653v-0.9M849.8 653v-0.9M851.4 653v-0.9M852.9 653v-1.6M854.5 653v-1.5M856.0 653v-0.9M857.6 653v-1.2M859.1 653v-1.1M860.7 653v-1.1M862.2 653v-1.1M863.8 653v-1.4M865.3 653v-1.3M866.9 653v-1.1M868.4 653v-1.0M870.0 653v-1.1M871.5 653v-0.9M873.1 653v-1.3M874.6 653v-1.5M876.2 653v-1.2M877.7 653v-0.9M879.3 653v-1.0M880.8 653v-1.2M882.4 653v-1.4M883.9 653v-1.6M885.5 653v-1.2M887.0 653v-1.6M888.6 653v-1.4M890.1 653v-1.3M891.7 653v-1.2M893.2 653v-1.3M894.8 653v-1.5M896.3 653v-1.3M897.9 653v-1.5M899.4 653v-1.3M901.0 653v-1.1M902.5 653v-1.4M904.1 653v-1.6M905.6 653v-1.0M907.2 653v-1.3M908.7 653v-1.3M910.3 653v-1.8M911.8 653v-1.8M913.4 653v-1.3M914.9 653v-1.8M916.5 653v-1.7M918.0 653v-1.2M919.6 653v-1.4M921.1 653v-1.0M922.7 653v-1.7M924.2 653v-1.6M925.8 653v-1.8M927.3 653v-1.7M928.9 653v-1.6M930.4 653v-1.7M932.0 653v-1.5M933.5 653v-1.0M935.1 653v-1.5M936.6 653v-1.0M938.2 653v-1.1M939.7 653v-1.8M941.3 653v-1.0M942.8 653v-1.1M944.4 653v-1.1M945.9 653v-1.9M947.5 653v-1.2M949.0 653v-1.0M950.6 653v-1.9M952.1 653v-1.1M953.7 653v-1.9M955.2 653v-1.7M956.8 653v-1.9M958.3 653v-2.0M959.9 653v-1.6M961.4 653v-1.9M963.0 653v-1.0M964.5 653v-1.8M966.1 653v-1.6M967.6 653v-1.8M969.2 653v-1.1M970.7 653v-1.8M972.3 653v-2.0M973.8 653v-1.1M975.4 653v-1.4M976.9 653v-1.6M978.5 653v-1.9M980.0 653v-1.3M981.6 653v-1.2M983.1 653v-1.3M984.7 653v-1.7M986.2 653v-1.9M987.8 653v-1.5M989.3 653v-1.5M990.9 653v-1.5M992.4 653v-1.4M994.0 653v-1.5M995.5 653v-1.1M997.1 653v-1.6M998.6 653v-2.2M1000.2 653v-1.5M1001.7 653v-1.9M1003.3 653v-1.3M1004.8 653v-1.9M1006.4 653v-2.0M1007.9 653v-1.9M1009.5 653v-1.7M1011.0 653v-1.6M1012.6 653v-1.8M1014.1 653v-2.1M1015.7 653v-1.3M1017.2 653v-1.2M1018.8 653v-2.0M1020.3 653v-2.2M1021.9 653v-1.7M1023.4 653v-1.6M1025.0 653v-2.0M1026.5 653v-1.3M1028.1 653v-1.4M1029.6 653v-1.4M1031.2 653v-1.8M1032.7 653v-1.5M1034.3 653v-1.4M1035.8 653v-2.0M1037.4 653v-2.3M1038.9 653v-1.5M1040.5 653v-2.0M1042.0 653v-1.6M1043.6 653v-2.2M1045.1 653v-1.9M1046.7 653v-1.5M1048.2 653v-1.4M1049.8 653v-1.2M1051.3 653v-1.8M1052.9 653v-1.6M1054.4 653v-1.4M1056.0 653v-1.6M1057.5 653v-1.6M1059.1 653v-2.1M1060.6 653v-1.3M1062.2 653v-2.4M1063.7 653v-1.8M1065.3 653v-1.9M1066.8 653v-1.8M1068.4 653v-2.3M1069.9 653v-2.2M1071.5 653v-1.9M1073.0 653v-1.8M1074.6 653v-2.1M1076.1 653v-2.3M1077.7 653v-1.7M1079.2 653v-2.2M1080.8 653v-2.5M1082.3 653v-1.8M1083.9 653v-1.5M1085.4 653v-1.5M1087.0 653v-2.2M1088.5 653v-2.1M1090.1 653v-2.5M1091.6 653v-2.4M1093.2 653v-1.5M1094.7 653v-1.5M1096.3 653v-1.6M1097.8 653v-1.5M1099.4 653v-2.2M1100.9 653v-2.4M1102.5 653v-2.5M1104.0 653v-1.6M1105.6 653v-2.4M1107.1 653v-1.7M1108.7 653v-1.8M1110.2 653v-2.3M1111.8 653v-1.4M1113.3 653v-1.4M1114.9 653v-2.4M1116.4 653v-1.7M1118.0 653v-1.8M1119.5 653v-2.1M1121.1 653v-2.2M1122.6 653v-1.3M1124.2 653v-1.7M1125.7 653v-1.9M1127.3 653v-2.0M1128.8 653v-1.6M1130.4 653v-2.1M1131.9 653v-2.6M1133.5 653v-1.8M1135.0 653v-2.1M1136.6 653v-1.5M1138.1 653v-1.7M1139.7 653v-2.3M1141.2 653v-2.2M1142.8 653v-3.9M1144.3 653v-3.9M1145.9 653v-2.2M1147.4 653v-4.0M1149.0 653v-2.8M1150.5 653v-3.6M1152.1 653v-3.6M1153.6 653v-2.6M1155.2 653v-3.4M1156.7 653v-3.4M1158.3 653v-3.7M1159.8 653v-2.6M1161.4 653v-3.6M1162.9 653v-4.1M1164.5 653v-3.4M1166.0 653v-3.1M1167.6 653v-2.2M1169.1 653v-3.0M1170.7 653v-2.7M1172.2 653v-3.5M1173.8 653v-3.4M1175.3 653v-3.2M1176.9 653v-2.4M1178.4 653v-3.4M1180.0 653v-3.3M1181.5 653v-2.4M1183.1 653v-3.9M1184.6 653v-3.4M1186.2 653v-2.2M1187.7 653v-4.0M1189.3 653v-2.3M1190.8 653v-2.7M1192.4 653v-3.5M1193.9 653v-3.3M1195.5 653v-3.2M1197.0 653v-3.4M1198.6 653v-3.0M1200.1 653v-2.7M1201.7 653v-2.4M1203.2 653v-2.1M1204.8 653v-3.5M1206.3 653v-3.6M1207.9 653v-3.2M1209.4 653v-3.6M1211.0 653v-2.8M1212.5 653v-2.6M1214.1 653v-2.8M1215.6 653v-3.9M1217.2 653v-2.1M1218.7 653v-3.1M1220.3 653v-2.5M1221.8 653v-3.6M1223.4 653v-2.7M1224.9 653v-2.7M1226.5 653v-2.9M1228.0 653v-3.1M1229.6 653v-3.6M1231.1 653v-2.7M1232.7 653v-3.8M1234.2 653v-2.2M1235.8 653v-2.6M147.0 653v-2.0M148.6 653v-1.0M150.1 653v-0.8M169.0 653v-3.0M170.6 653v-1.7M172.1 653v-1.0M173.7 653v-0.8M346.0 653v-1.2M347.6 653v-0.8M408.0 653v-2.2M409.6 653v-1.1M411.1 653v-0.8M479.0 653v-7.0M480.6 653v-4.9M482.1 653v-3.4M483.6 653v-2.3M485.2 653v-1.6M486.8 653v-1.1M549.0 653v-1.0M550.5 653v-0.8M601.0 653v-2.0M602.5 653v-1.3M604.1 653v-0.8M605.6 653v-0.8M607.2 653v-0.8M624.0 653v-7.0M625.5 653v-4.9M627.1 653v-3.4M628.6 653v-2.3M630.2 653v-1.6M631.8 653v-1.1M685.0 653v-3.0M686.5 653v-1.4M688.1 653v-0.8M725.0 653v-3.0M726.5 653v-1.4M728.1 653v-0.8M738.0 653v-4.0M739.5 653v-2.3M741.1 653v-1.3M742.6 653v-0.8M764.0 653v-13.0M765.5 653v-9.5M767.1 653v-6.9M768.6 653v-5.1M770.2 653v-3.7M771.8 653v-2.7M773.3 653v-2.0M799.0 653v-3.0M800.5 653v-1.4M802.1 653v-0.8M808.0 653v-4.0M809.5 653v-1.9M811.1 653v-0.9M851.0 653v-7.0M852.5 653v-4.0M854.1 653v-2.3M855.6 653v-1.3M891.0 653v-6.0M892.5 653v-3.5M894.1 653v-2.0M895.6 653v-1.2M928.0 653v-5.0M929.5 653v-2.9M931.1 653v-1.7M932.6 653v-1.0M958.0 653v-5.0M959.5 653v-2.4M961.1 653v-1.2M1024.0 653v-5.0M1025.5 653v-2.4M1027.1 653v-1.2M1046.0 653v-4.0M1047.5 653v-1.9M1049.1 653v-0.9M1063.0 653v-4.0M1064.5 653v-1.9M1066.1 653v-0.9M1125.7 653v-21.0M1127.2 653v-16.4M1128.8 653v-12.9M1130.4 653v-10.1M1131.9 653v-7.9M1133.5 653v-6.2M1135.0 653v-4.8M1136.5 653v-3.8M1138.1 653v-3.0M1149.0 653v-5.0M1150.5 653v-2.4M1152.1 653v-1.2M1183.0 653v-5.0M1184.5 653v-2.4M1186.1 653v-1.2M1236.7 653v-36.0M1238.2 653v-28.2M1239.8 653v-22.1M1241.4 653v-17.3M1242.9 653v-13.5M1244.5 653v-10.6M1246.0 653v-8.3M1247.5 653v-6.5M1249.1 653v-5.1" stroke="#35b035" stroke-width="0.95" fill="none"/><path d="M19.5 453.1H1253.5V612.6H19.5zM19.5 615.5H1253.5V653.5H19.5z" stroke="#555" stroke-width="1" fill="none"/><text x="1256.8" y="466.6" font-size="6.1" fill="#000" font-family='"Liberation Sans","Noto Sans CJK SC",sans-serif'>120706</text><text x="1256.8" y="487.9" font-size="6.1" fill="#000" font-family='"Liberation Sans","Noto Sans CJK SC",sans-serif'>103462</text><text x="1256.8" y="509.3" font-size="6.1" fill="#000" font-family='"Liberation Sans","Noto Sans CJK SC",sans-serif'>86218</text><text x="1256.8" y="530.6" font-size="6.1" fill="#000" font-family='"Liberation Sans","Noto Sans CJK SC",sans-serif'>68975</text><text x="1256.8" y="551.9" font-size="6.1" fill="#000" font-family='"Liberation Sans","Noto Sans CJK SC",sans-serif'>51731</text><text x="1256.8" y="573.3" font-size="6.1" fill="#000" font-family='"Liberation Sans","Noto Sans CJK SC",sans-serif'>34487</text><text x="1256.8" y="594.6" font-size="6.1" fill="#000" font-family='"Liberation Sans","Noto Sans CJK SC",sans-serif'>17244</text><text x="1256.8" y="616.4" font-size="6.1" fill="#000" font-family='"Liberation Sans","Noto Sans CJK SC",sans-serif'>0</text><text x="20" y="661.3" font-size="6.6" fill="#000" font-family='"Liberation Sans","Noto Sans CJK SC",sans-serif'>0</text><text x="40.3" y="661.3" text-anchor="end" font-size="6.6" fill="#000" font-family='"Liberation Sans","Noto Sans CJK SC",sans-serif'>14</text><path d="M40.0 653v2" stroke="#333" stroke-width=".8"/><text x="61.6" y="661.3" text-anchor="end" font-size="6.6" fill="#000" font-family='"Liberation Sans","Noto Sans CJK SC",sans-serif'>26</text><path d="M61.3 653v2" stroke="#333" stroke-width=".8"/><text x="83.0" y="661.3" text-anchor="end" font-size="6.6" fill="#000" font-family='"Liberation Sans","Noto Sans CJK SC",sans-serif'>38</text><path d="M82.7 653v2" stroke="#333" stroke-width=".8"/><text x="104.3" y="661.3" text-anchor="end" font-size="6.6" fill="#000" font-family='"Liberation Sans","Noto Sans CJK SC",sans-serif'>50</text><path d="M104.0 653v2" stroke="#333" stroke-width=".8"/><text x="125.6" y="661.3" text-anchor="end" font-size="6.6" fill="#000" font-family='"Liberation Sans","Noto Sans CJK SC",sans-serif'>62</text><path d="M125.3 653v2" stroke="#333" stroke-width=".8"/><text x="147.0" y="661.3" text-anchor="end" font-size="6.6" fill="#000" font-family='"Liberation Sans","Noto Sans CJK SC",sans-serif'>74</text><path d="M146.7 653v2" stroke="#333" stroke-width=".8"/><text x="168.3" y="661.3" text-anchor="end" font-size="6.6" fill="#000" font-family='"Liberation Sans","Noto Sans CJK SC",sans-serif'>86</text><path d="M168.0 653v2" stroke="#333" stroke-width=".8"/><text x="189.6" y="661.3" text-anchor="end" font-size="6.6" fill="#000" font-family='"Liberation Sans","Noto Sans CJK SC",sans-serif'>98</text><path d="M189.3 653v2" stroke="#333" stroke-width=".8"/><text x="211.0" y="661.3" text-anchor="end" font-size="6.6" fill="#000" font-family='"Liberation Sans","Noto Sans CJK SC",sans-serif'>111</text><path d="M210.7 653v2" stroke="#333" stroke-width=".8"/><text x="232.3" y="661.3" text-anchor="end" font-size="6.6" fill="#000" font-family='"Liberation Sans","Noto Sans CJK SC",sans-serif'>123</text><path d="M232.0 653v2" stroke="#333" stroke-width=".8"/><text x="253.6" y="661.3" text-anchor="end" font-size="6.6" fill="#000" font-family='"Liberation Sans","Noto Sans CJK SC",sans-serif'>135</text><path d="M253.3 653v2" stroke="#333" stroke-width=".8"/><text x="275.0" y="661.3" text-anchor="end" font-size="6.6" fill="#000" font-family='"Liberation Sans","Noto Sans CJK SC",sans-serif'>147</text><path d="M274.7 653v2" stroke="#333" stroke-width=".8"/><text x="296.3" y="661.3" text-anchor="end" font-size="6.6" fill="#000" font-family='"Liberation Sans","Noto Sans CJK SC",sans-serif'>159</text><path d="M296.0 653v2" stroke="#333" stroke-width=".8"/><text x="317.6" y="661.3" text-anchor="end" font-size="6.6" fill="#000" font-family='"Liberation Sans","Noto Sans CJK SC",sans-serif'>171</text><path d="M317.3 653v2" stroke="#333" stroke-width=".8"/><text x="339.0" y="661.3" text-anchor="end" font-size="6.6" fill="#000" font-family='"Liberation Sans","Noto Sans CJK SC",sans-serif'>183</text><path d="M338.7 653v2" stroke="#333" stroke-width=".8"/><text x="360.3" y="661.3" text-anchor="end" font-size="6.6" fill="#000" font-family='"Liberation Sans","Noto Sans CJK SC",sans-serif'>195</text><path d="M360.0 653v2" stroke="#333" stroke-width=".8"/><text x="381.6" y="661.3" text-anchor="end" font-size="6.6" fill="#000" font-family='"Liberation Sans","Noto Sans CJK SC",sans-serif'>208</text><path d="M381.3 653v2" stroke="#333" stroke-width=".8"/><text x="403.0" y="661.3" text-anchor="end" font-size="6.6" fill="#000" font-family='"Liberation Sans","Noto Sans CJK SC",sans-serif'>220</text><path d="M402.7 653v2" stroke="#333" stroke-width=".8"/><text x="424.3" y="661.3" text-anchor="end" font-size="6.6" fill="#000" font-family='"Liberation Sans","Noto Sans CJK SC",sans-serif'>232</text><path d="M424.0 653v2" stroke="#333" stroke-width=".8"/><text x="445.6" y="661.3" text-anchor="end" font-size="6.6" fill="#000" font-family='"Liberation Sans","Noto Sans CJK SC",sans-serif'>244</text><path d="M445.3 653v2" stroke="#333" stroke-width=".8"/><text x="467.0" y="661.3" text-anchor="end" font-size="6.6" fill="#000" font-family='"Liberation Sans","Noto Sans CJK SC",sans-serif'>256</text><path d="M466.7 653v2" stroke="#333" stroke-width=".8"/><text x="488.3" y="661.3" text-anchor="end" font-size="6.6" fill="#000" font-family='"Liberation Sans","Noto Sans CJK SC",sans-serif'>268</text><path d="M488.0 653v2" stroke="#333" stroke-width=".8"/><text x="509.6" y="661.3" text-anchor="end" font-size="6.6" fill="#000" font-family='"Liberation Sans","Noto Sans CJK SC",sans-serif'>280</text><path d="M509.3 653v2" stroke="#333" stroke-width=".8"/><text x="531.0" y="661.3" text-anchor="end" font-size="6.6" fill="#000" font-family='"Liberation Sans","Noto Sans CJK SC",sans-serif'>292</text><path d="M530.7 653v2" stroke="#333" stroke-width=".8"/><text x="552.3" y="661.3" text-anchor="end" font-size="6.6" fill="#000" font-family='"Liberation Sans","Noto Sans CJK SC",sans-serif'>304</text><path d="M552.0 653v2" stroke="#333" stroke-width=".8"/><text x="573.6" y="661.3" text-anchor="end" font-size="6.6" fill="#000" font-family='"Liberation Sans","Noto Sans CJK SC",sans-serif'>317</text><path d="M573.3 653v2" stroke="#333" stroke-width=".8"/><text x="595.0" y="661.3" text-anchor="end" font-size="6.6" fill="#000" font-family='"Liberation Sans","Noto Sans CJK SC",sans-serif'>329</text><path d="M594.7 653v2" stroke="#333" stroke-width=".8"/><text x="616.3" y="661.3" text-anchor="end" font-size="6.6" fill="#000" font-family='"Liberation Sans","Noto Sans CJK SC",sans-serif'>341</text><path d="M616.0 653v2" stroke="#333" stroke-width=".8"/><text x="637.6" y="661.3" text-anchor="end" font-size="6.6" fill="#000" font-family='"Liberation Sans","Noto Sans CJK SC",sans-serif'>353</text><path d="M637.3 653v2" stroke="#333" stroke-width=".8"/><text x="659.0" y="661.3" text-anchor="end" font-size="6.6" fill="#000" font-family='"Liberation Sans","Noto Sans CJK SC",sans-serif'>365</text><path d="M658.7 653v2" stroke="#333" stroke-width=".8"/><text x="680.3" y="661.3" text-anchor="end" font-size="6.6" fill="#000" font-family='"Liberation Sans","Noto Sans CJK SC",sans-serif'>377</text><path d="M680.0 653v2" stroke="#333" stroke-width=".8"/><text x="701.6" y="661.3" text-anchor="end" font-size="6.6" fill="#000" font-family='"Liberation Sans","Noto Sans CJK SC",sans-serif'>389</text><path d="M701.3 653v2" stroke="#333" stroke-width=".8"/><text x="723.0" y="661.3" text-anchor="end" font-size="6.6" fill="#000" font-family='"Liberation Sans","Noto Sans CJK SC",sans-serif'>401</text><path d="M722.7 653v2" stroke="#333" stroke-width=".8"/><text x="744.3" y="661.3" text-anchor="end" font-size="6.6" fill="#000" font-family='"Liberation Sans","Noto Sans CJK SC",sans-serif'>414</text><path d="M744.0 653v2" stroke="#333" stroke-width=".8"/><text x="765.6" y="661.3" text-anchor="end" font-size="6.6" fill="#000" font-family='"Liberation Sans","Noto Sans CJK SC",sans-serif'>426</text><path d="M765.3 653v2" stroke="#333" stroke-width=".8"/><text x="787.0" y="661.3" text-anchor="end" font-size="6.6" fill="#000" font-family='"Liberation Sans","Noto Sans CJK SC",sans-serif'>438</text><path d="M786.7 653v2" stroke="#333" stroke-width=".8"/><text x="808.3" y="661.3" text-anchor="end" font-size="6.6" fill="#000" font-family='"Liberation Sans","Noto Sans CJK SC",sans-serif'>450</text><path d="M808.0 653v2" stroke="#333" stroke-width=".8"/><text x="829.6" y="661.3" text-anchor="end" font-size="6.6" fill="#000" font-family='"Liberation Sans","Noto Sans CJK SC",sans-serif'>462</text><path d="M829.3 653v2" stroke="#333" stroke-width=".8"/><text x="851.0" y="661.3" text-anchor="end" font-size="6.6" fill="#000" font-family='"Liberation Sans","Noto Sans CJK SC",sans-serif'>474</text><path d="M850.7 653v2" stroke="#333" stroke-width=".8"/><text x="872.3" y="661.3" text-anchor="end" font-size="6.6" fill="#000" font-family='"Liberation Sans","Noto Sans CJK SC",sans-serif'>486</text><path d="M872.0 653v2" stroke="#333" stroke-width=".8"/><text x="893.6" y="661.3" text-anchor="end" font-size="6.6" fill="#000" font-family='"Liberation Sans","Noto Sans CJK SC",sans-serif'>498</text><path d="M893.3 653v2" stroke="#333" stroke-width=".8"/><text x="915.0" y="661.3" text-anchor="end" font-size="6.6" fill="#000" font-family='"Liberation Sans","Noto Sans CJK SC",sans-serif'>511</text><path d="M914.7 653v2" stroke="#333" stroke-width=".8"/><text x="936.3" y="661.3" text-anchor="end" font-size="6.6" fill="#000" font-family='"Liberation Sans","Noto Sans CJK SC",sans-serif'>523</text><path d="M936.0 653v2" stroke="#333" stroke-width=".8"/><text x="957.6" y="661.3" text-anchor="end" font-size="6.6" fill="#000" font-family='"Liberation Sans","Noto Sans CJK SC",sans-serif'>535</text><path d="M957.3 653v2" stroke="#333" stroke-width=".8"/><text x="979.0" y="661.3" text-anchor="end" font-size="6.6" fill="#000" font-family='"Liberation Sans","Noto Sans CJK SC",sans-serif'>547</text><path d="M978.7 653v2" stroke="#333" stroke-width=".8"/><text x="1000.3" y="661.3" text-anchor="end" font-size="6.6" fill="#000" font-family='"Liberation Sans","Noto Sans CJK SC",sans-serif'>559</text><path d="M1000.0 653v2" stroke="#333" stroke-width=".8"/><text x="1021.6" y="661.3" text-anchor="end" font-size="6.6" fill="#000" font-family='"Liberation Sans","Noto Sans CJK SC",sans-serif'>571</text><path d="M1021.3 653v2" stroke="#333" stroke-width=".8"/><text x="1043.0" y="661.3" text-anchor="end" font-size="6.6" fill="#000" font-family='"Liberation Sans","Noto Sans CJK SC",sans-serif'>583</text><path d="M1042.7 653v2" stroke="#333" stroke-width=".8"/><text x="1064.3" y="661.3" text-anchor="end" font-size="6.6" fill="#000" font-family='"Liberation Sans","Noto Sans CJK SC",sans-serif'>595</text><path d="M1064.0 653v2" stroke="#333" stroke-width=".8"/><text x="1085.6" y="661.3" text-anchor="end" font-size="6.6" fill="#000" font-family='"Liberation Sans","Noto Sans CJK SC",sans-serif'>607</text><path d="M1085.3 653v2" stroke="#333" stroke-width=".8"/><text x="1107.0" y="661.3" text-anchor="end" font-size="6.6" fill="#000" font-family='"Liberation Sans","Noto Sans CJK SC",sans-serif'>620</text><path d="M1106.7 653v2" stroke="#333" stroke-width=".8"/><text x="1128.3" y="661.3" text-anchor="end" font-size="6.6" fill="#000" font-family='"Liberation Sans","Noto Sans CJK SC",sans-serif'>632</text><path d="M1128.0 653v2" stroke="#333" stroke-width=".8"/><text x="1149.6" y="661.3" text-anchor="end" font-size="6.6" fill="#000" font-family='"Liberation Sans","Noto Sans CJK SC",sans-serif'>644</text><path d="M1149.3 653v2" stroke="#333" stroke-width=".8"/><text x="1171.0" y="661.3" text-anchor="end" font-size="6.6" fill="#000" font-family='"Liberation Sans","Noto Sans CJK SC",sans-serif'>656</text><path d="M1170.7 653v2" stroke="#333" stroke-width=".8"/><text x="1192.3" y="661.3" text-anchor="end" font-size="6.6" fill="#000" font-family='"Liberation Sans","Noto Sans CJK SC",sans-serif'>668</text><path d="M1192.0 653v2" stroke="#333" stroke-width=".8"/><text x="1213.6" y="661.3" text-anchor="end" font-size="6.6" fill="#000" font-family='"Liberation Sans","Noto Sans CJK SC",sans-serif'>680</text><path d="M1213.3 653v2" stroke="#333" stroke-width=".8"/><text x="1235.0" y="661.3" text-anchor="end" font-size="6.6" fill="#000" font-family='"Liberation Sans","Noto Sans CJK SC",sans-serif'>692</text><path d="M1234.7 653v2" stroke="#333" stroke-width=".8"/><polygon points="1125,558.3 1177.6,517.7 1221.1,483.6 1219.4,481.3 1228.7,480.5 1225,488.9 1223.3,486.6 1178.6,518.9" fill="#f5352c"/></svg><div class="a t" style="left:22px;top:454.500px;font-size:6.100px;line-height:8px;color:#111"><span style="color:#1a1aa0">余额</span> / <span style="color:#22b030">净值</span> / 每个即时价格(基于所有可利用的最小时段的每一个价格的分形插值计算) / 99.90%</div><div class="a t " style="left:22px;top:617.5px;font-size:6.4px;line-height:8.4px;color:#111;">手数</div><div class="a" style="left:1011px;top:551px;width:35px;height:13.5px;background:#fcdcdc;"></div><div class="a t" style="left:1002.500px;top:546px;font-size:19.800px;line-height:24px;color:#f5352c;letter-spacing:-.15px">2015</div><div class="a t " style="left:1046px;top:547.8px;font-size:15px;line-height:17px;color:#f5352c;line-height:20px;">年10月15日</div><div class="a t " style="left:1010px;top:567.5px;font-size:15px;line-height:17px;color:#f5352c;line-height:20px;">欧元美元隔夜利息多单11</div><div class="a" style="left:16px;top:665px;width:1264px;height:1px;background:#333;"></div><div class="a" style="left:76px;top:665px;width:37.5px;height:15px;background:#fff;border:1px solid #222;border-top:none;"></div><div class="a t " style="left:24.5px;top:667.5px;font-size:8px;line-height:10px;color:#8a8a8a;">设置</div><div class="a t " style="left:53.5px;top:667.5px;font-size:8px;line-height:10px;color:#8a8a8a;">结果</div><div class="a t " style="left:83px;top:667.5px;font-size:8px;line-height:10px;color:#111;">净值图</div><div class="a t " style="left:120.5px;top:667.5px;font-size:8px;line-height:10px;color:#8a8a8a;">报告</div><div class="a t " style="left:149.5px;top:667.5px;font-size:8px;line-height:10px;color:#8a8a8a;">日志</div><div class="a" style="left:47px;top:668px;width:1px;height:9px;background:#999;"></div><div class="a" style="left:143.5px;top:668px;width:1px;height:9px;background:#999;"></div><div class="a" style="left:172.5px;top:668px;width:1px;height:9px;background:#999;"></div><div class="a" style="left:6px;top:683px;width:1274px;height:1px;background:#cfcfcf;"></div><div class="a" style="left:6px;top:684px;width:1274px;height:10px;background:#f8f8f8;"></div><div class="a t " style="left:7px;top:687.4px;font-size:8px;line-height:10px;color:#111;">寻求帮助,请按F1键</div><div class="a t " style="left:746px;top:687.4px;font-size:8px;line-height:10px;color:#111;">Default</div><div class="a" style="left:742.5px;top:686px;width:1px;height:8px;background:#b0b0b0;"></div><div class="a" style="left:832.5px;top:686px;width:1px;height:8px;background:#b0b0b0;"></div><div class="a" style="left:910.5px;top:686px;width:1px;height:8px;background:#b0b0b0;"></div><div class="a" style="left:965px;top:686px;width:1px;height:8px;background:#b0b0b0;"></div><div class="a" style="left:1019px;top:686px;width:1px;height:8px;background:#b0b0b0;"></div><div class="a" style="left:1071px;top:686px;width:1px;height:8px;background:#b0b0b0;"></div><div class="a" style="left:1124px;top:686px;width:1px;height:8px;background:#b0b0b0;"></div><div class="a" style="left:1180px;top:685.5px;width:15px;height:8px;background:#c0392b;"></div><div class="a" style="left:1183px;top:685.5px;width:1px;height:8px;background:#e8a090;"></div><div class="a" style="left:1187px;top:685.5px;width:1px;height:8px;background:#e8a090;"></div><div class="a" style="left:1191px;top:685.5px;width:1px;height:8px;background:#e8a090;"></div><div class="a t " style="left:1198px;top:687.4px;font-size:8px;line-height:10px;color:#111;">没有连接</div><div class="a" style="left:0px;top:694px;width:1280px;height:26px;background:linear-gradient(90deg,#23363f 0%,#22343f 45%,#1f2e41 85%,#1e2c42 100%);"></div><div class="a" style="left:197px;top:694px;width:32px;height:26px;background:#3f4f59;"></div><div class="a" style="left:167px;top:718.5px;width:28px;height:1.5px;background:#8fc8ec;"></div><div class="a" style="left:197px;top:718.5px;width:32px;height:1.5px;background:#9fd4f4;"></div><svg class="a" style="left:0;top:693.400px" width="240" height="27" viewBox="0 0 240 27">
<path d="M10.500 9.800l4.600-.7v4.300h-4.600zM15.800 9l5.700-.9v5.300h-5.700zM10.500 14.100h4.600v4.300l-4.600-.7zM15.800 14.100h5.700v5.300l-5.700-.9z" fill="#fff"/>
<rect x="44.600" y="10" width="5.800" height="7" fill="none" stroke="#f4f4f4" stroke-width="1.300"/><path d="M43.300 8.300v10.400M51.700 8.300v10.400M53.800 8.300v10.400" stroke="#f4f4f4" stroke-width="1"/><circle cx="53.800" cy="11.700" r=".900" fill="#fff"/>
<circle cx="82.500" cy="13.400" r="7.900" fill="#1f86d8"/><path d="M82.500 5.500a7.900 7.900 0 0 1 7.900 7.900c0 2-1.500 3.400-3.400 3.400-2.300 0-3.400-1.800-3-3.300.400-1.300-.500-2.900-2.600-2.900-2.900 0-5.400 1.800-6.500 4.300.300-5.300 3.600-9.400 7.600-9.400z" fill="#48d07c"/><path d="M77.800 13.200c0 4.200 3.200 7.600 7.600 7.600 1.500 0 2.900-.500 4-1.300-3.200.600-6.500-1-6.500-4.700 0-1.400.600-2.500 1.500-3.200-3.500-.400-6.600.600-6.600 1.600z" fill="#0b58a6"/>
<path d="M108 8.500h5l1.500 2h7v10h-13.500z" fill="#f5c84a"/><rect x="108" y="12" width="13.500" height="8.500" fill="#fbd867"/><rect x="111" y="15.500" width="7.500" height="5" fill="#3c9ae8"/><rect x="112.500" y="17" width="4.500" height="3.500" fill="#fbd867"/>
<circle cx="147.500" cy="14" r="8" fill="#e33b2e"/><path d="M147.500 14L140 10a8 8 0 0 0 3.500 11z" fill="#2da94f"/><path d="M147.500 14l-4 7a8 8 0 0 0 12-7z" fill="#fcc31e"/><path d="M140.500 10a8 8 0 0 1 14.500 1h-7.500z" fill="#e33b2e"/><circle cx="147.500" cy="14" r="3.700" fill="#fff"/><circle cx="147.500" cy="14" r="2.900" fill="#3f86f0"/>
<path d="M174.500 14.500l2-4h8.500l2 4z" fill="#f0c020"/><path d="M176.500 10.500l1-1.500h6.500l1 1.500z" fill="#222"/><circle cx="177" cy="16.500" r="1.800" fill="#111"/><circle cx="185" cy="16.500" r="1.800" fill="#111"/><path d="M177 16.500l-2.500 3M185 16.500l2.500 3M181 15v4.500" stroke="#ccc" stroke-width=".9"/>
<rect x="209.500" y="8" width="10" height="9" rx="1" fill="#e8f1fb" stroke="#5a8fd0" stroke-width=".9"/><rect x="212.500" y="11" width="9" height="8.500" rx="1" fill="#dbe8f7" stroke="#5a8fd0" stroke-width=".9"/><circle cx="208.500" cy="13.500" r="2.600" fill="#f0c090"/><path d="M204.500 21c0-5 8-5 8 0z" fill="#3aa03a"/><path d="M206 12.500c0-3 5-3 5 0z" fill="#c03020"/>
</svg><svg class="a" style="left:1040px;top:701px" width="12" height="12" viewBox="0 0 12 12"><path d="M5.500 .800c1.600 1 3 1.300 4.500 1.300v4.200c0 2.600-2.500 4-4.500 4.900-2-.900-4.500-2.300-4.500-4.900v-4.200c1.500 0 2.900-.300 4.500-1.300z" fill="#fff"/><path d="M5.500 .800v10.400M1 5.500h9" stroke="#1f2f40" stroke-width=".8"/><path d="M8.500 6.500l3 5h-6z" fill="#f4c020"/></svg><svg class="a" style="left:1056px;top:701px" width="12" height="12" viewBox="0 0 12 12"><rect x="2" y="4" width="5.500" height="7.500" rx="1" fill="none" stroke="#e4e6e8" stroke-width="1"/><rect x="3.300" y="1" width="3" height="3" fill="none" stroke="#e4e6e8" stroke-width=".9"/><path d="M8 10.500l2-.800" stroke="#ccc" stroke-width=".8"/></svg><svg class="a" style="left:1071.5px;top:701px" width="12" height="12" viewBox="0 0 12 12"><ellipse cx="6.500" cy="5" rx="4.800" ry="3.600" transform="rotate(35 6.500 5)" fill="#e4e4e4"/><path d="M2 11c1-3 5-3.500 8-1l1 1z" fill="#bbb"/><path d="M3.500 2.500l5.500 6" stroke="#1f2f40" stroke-width="1.100"/><circle cx="4" cy="8" r="1.300" fill="#333"/></svg><svg class="a" style="left:1088px;top:701px" width="12" height="12" viewBox="0 0 12 12"><rect x="0" y=".500" width="10.800" height="10.800" rx="1.800" fill="#f0186a"/><path d="M2.500 3l4.500 4.500M7 7.500v-3M7 7.500h-3" stroke="#fff" stroke-width="1.200" fill="none"/><rect x="6.300" y="6.800" width="4.300" height="4.300" fill="#3a8ee0"/></svg><svg class="a" style="left:1104px;top:701px" width="12" height="12" viewBox="0 0 12 12"><rect x="0" y=".500" width="11" height="10.800" fill="#151515"/><path d="M1.500 5c2-3 6-3 8 0-2 3-6 3-8 0z" fill="#76b900"/><path d="M4 5c1-1.500 3-1.500 4 0" stroke="#151515" stroke-width=".7" fill="none"/><circle cx="8.800" cy="8.800" r="2.300" fill="#ddd"/><path d="M7.800 8.800h2M8.800 7.800v2" stroke="#333" stroke-width=".6"/></svg><svg class="a" style="left:1119.5px;top:701px" width="12" height="12" viewBox="0 0 12 12"><path d="M3 9.500c-2.500 0-2.800-3.200 0-3.600.500-3 5-3.400 6-1 2.600-.400 3.500 3.200 1.300 4.600z" fill="#aab2bb"/><path d="M1.500 2l9.500 8.500" stroke="#d5d9dd" stroke-width="1.100"/></svg><svg class="a" style="left:1136px;top:701px" width="12" height="12" viewBox="0 0 12 12"><path d="M3 9c-2.500 0-2.800-3.200 0-3.600.500-3 5-3.400 6-1 2.600-.400 3.500 3.200 1.300 4.600z" fill="#d8dde2"/><circle cx="8.500" cy="8.500" r="2.900" fill="#2f8fe0"/><path d="M7 8.500h3M8.500 7v3" stroke="#fff" stroke-width=".8"/></svg><svg class="a" style="left:1153px;top:701px" width="12" height="12" viewBox="0 0 12 12"><path d="M1.500 10.500a8.500 8.500 0 0 1 8.500-8.500M4.300 10.500a5.700 5.700 0 0 1 5.700-5.700M7 10.500a3 3 0 0 1 3-3" stroke="#c8ccd0" stroke-width="1.100" fill="none"/><circle cx="9.800" cy="10.300" r=".900" fill="#ddd"/></svg><svg class="a" style="left:1167px;top:701px" width="12" height="12" viewBox="0 0 12 12"><path d="M1 4.500h2l2.800-2.500v8l-2.800-2.500h-2z" fill="none" stroke="#fff" stroke-width=".9"/><path d="M7.500 4.500l3 3M10.500 4.500l-3 3" stroke="#fff" stroke-width=".9"/></svg><svg class="a" style="left:1252px;top:701px" width="13" height="13" viewBox="0 0 13 13"><path d="M.800 1h10.700v8h-4.500l-2.200 2.200v-2.200h-4z" fill="none" stroke="#fff" stroke-width="1"/></svg><div class="a t " style="left:1182.5px;top:700.3px;font-size:11px;line-height:13px;color:#fff;line-height:14px;font-weight:500;">中</div><div class="a t " style="left:1210.5px;top:695.5px;font-size:8.6px;line-height:10.6px;color:#fff;">12:46</div><div class="a t " style="left:1202.5px;top:708.7px;font-size:8.6px;line-height:10.6px;color:#fff;">2025/8/3</div></body></html>
